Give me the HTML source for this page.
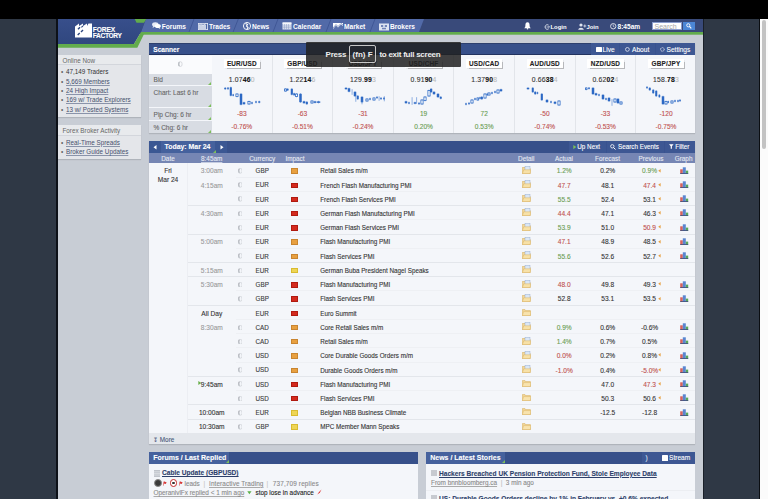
<!DOCTYPE html><html><head><meta charset="utf-8"><style>
*{margin:0;padding:0;box-sizing:border-box}
html,body{width:768px;height:499px;overflow:hidden;background:#2f3845;font-family:"Liberation Sans",sans-serif;}
.abs{position:absolute}
#topbar{left:0;top:0;width:768px;height:18.6px;background:#000;z-index:6}
#sb{left:759px;top:17px;width:9px;height:482px;background:#fbfbfb;border-left:1px solid #0b0e12}
#sbthumb{left:762.4px;top:20px;width:3.6px;height:129px;background:#c3c3c3;border-radius:2px}
#page{left:57px;top:18px;width:646px;height:481px;background:#c8cdd5;overflow:hidden}
#pageline{left:56.2px;top:18px;width:1.4px;height:481px;background:#0d1118;z-index:5}
.t{position:absolute;white-space:nowrap;-webkit-text-stroke:0.1px currentColor}
.nv{position:absolute;color:#fff;font-weight:bold;font-size:6.6px;line-height:8px;white-space:nowrap;top:4.8px}
.side{position:absolute;left:1px;width:83px;background:#e4e6ea;color:#333;font-size:6.3px;box-shadow:0 1px 1px rgba(0,0,0,.12)}
.side .sh{height:10.5px;line-height:11.2px;padding-left:4.5px;color:#666;border-bottom:1px solid #d3d6dc;background:#e8eaed}
.side ul{list-style:none;padding:2.1px 0 0 3px}
.side li{height:9.3px;line-height:9.3px;position:relative;padding-left:5px}
.side li:before{content:"\2022";position:absolute;left:0px;top:0;color:#666;font-size:6.5px}
.side a{color:#44506c;text-decoration:underline;text-decoration-color:#8a94aa}
</style></head><body><div id="wrap" style="position:absolute;left:0;top:0;width:768px;height:499px">
<div id="topbar" class="abs"></div>
<div id="pageline" class="abs"></div>
<div class="abs" style="left:702.6px;top:18px;width:1.2px;height:481px;background:#1a2029;z-index:5"></div>
<div id="page" class="abs">
<svg class="abs" style="left:0;top:0" width="646" height="32" viewBox="0 0 646 32">
<defs><linearGradient id="lg" x1="0" y1="0" x2="0" y2="1"><stop offset="0" stop-color="#384f8c"/><stop offset="1" stop-color="#30477f"/></linearGradient></defs>
<rect x="0" y="0" width="646" height="16" fill="#394a7a"/>
<polygon points="89,1 367,1 362,14 84,14" fill="#526aa8"/>
<g stroke="#3b5290" stroke-width="0.8">
<line x1="137" y1="1" x2="132" y2="14"/><line x1="181.3" y1="1" x2="176.1" y2="14"/>
<line x1="221" y1="1" x2="216" y2="14"/><line x1="274" y1="1" x2="269" y2="14"/>
<line x1="318" y1="1" x2="313" y2="14"/></g>
<rect x="84" y="14" width="562" height="2.7" fill="#62ac4c"/>
<polygon points="0,0 89,0 84,14 77,26.1 0,26.1" fill="url(#lg)"/>
<polygon points="77.7,1 89.3,1 87,4.7 79.5,4.7" fill="#62ac4c"/>
<polygon points="84,14 88,14 80.3,29.8 0,29.8 0,26.1 77,26.1" fill="#62ac4c"/>
</svg>
<svg class="abs" style="left:17.5px;top:5.2px" width="17" height="15" viewBox="0 0 17 15">
<path d="M0,3.5 L4,0.5 L4,3 L8,0.5 L8,3 L12,0.5 L12,3 L13.5,0.5 L17,0.5 L17,14.5 L0,14.5 Z" fill="#fff"/>
<path d="M2.5,5.8 l2,-2 l1,1 l-2,2z M5.5,8.5 l2,-2 l1,1 l-2,2z M2.2,11.5 l2,-2 l1,1 l-2,2z M6,4 l1.6,-1.6 l0.8,0.8 l-1.6,1.6z" fill="#2c467f"/>
</svg>
<div class="t" style="left:35.8px;top:8.6px;color:#fff;font-weight:bold;font-size:6.6px;line-height:6px;letter-spacing:-0.1px">FOREX</div>
<div class="t" style="left:35.8px;top:14.6px;color:#fff;font-weight:bold;font-size:6.6px;line-height:6px;letter-spacing:-0.35px">FACTORY</div>
<svg class="abs" style="left:95px;top:4.3px" width="9" height="7" viewBox="0 0 9 7"><ellipse cx="3.3" cy="2.6" rx="3.2" ry="2.3" fill="#e8ecf6"/><ellipse cx="5.8" cy="4" rx="3" ry="2.1" fill="#fff"/><path d="M1.2,4 L0.6,6 L3,4.6z" fill="#e8ecf6"/><path d="M7.5,5.5 L8.4,6.9 L6,5.8z" fill="#fff"/></svg>
<div class="nv" style="left:104.8px">Forums</div>
<svg class="abs" style="left:140.7px;top:4.8px" width="10" height="7" viewBox="0 0 10 7"><rect x="0.4" y="0.4" width="9.2" height="6.2" fill="none" stroke="#e6eaf4" stroke-width="0.8"/><rect x="1" y="2" width="7" height="4.5" fill="#c9d2e6"/><path d="M1,2 L3,1 L5,2.2 L8,0.8" stroke="#fff" stroke-width="0.7" fill="none"/></svg>
<div class="nv" style="left:152px">Trades</div>
<svg class="abs" style="left:186px;top:4.4px" width="8" height="8" viewBox="0 0 8 8"><circle cx="4" cy="4" r="3.6" fill="none" stroke="#fff" stroke-width="0.9"/><path d="M2.5,1.5 L4.5,2.5 L3.5,4 L5,5.5 L4,7" stroke="#fff" stroke-width="1.1" fill="none"/></svg>
<div class="nv" style="left:195px">News</div>
<svg class="abs" style="left:225px;top:4.4px" width="10" height="8" viewBox="0 0 10 8"><rect x="0.5" y="1" width="9" height="6.5" fill="#dfe5f2"/><g stroke="#8d9cc4" stroke-width="0.5"><line x1="2.5" y1="2" x2="2.5" y2="7.5"/><line x1="4.5" y1="2" x2="4.5" y2="7.5"/><line x1="6.5" y1="2" x2="6.5" y2="7.5"/><line x1="0.5" y1="4" x2="9.5" y2="4"/><line x1="0.5" y1="5.7" x2="9.5" y2="5.7"/></g><rect x="0.5" y="0.3" width="9" height="1.4" fill="#fff"/></svg>
<div class="nv" style="left:236px">Calendar</div>
<svg class="abs" style="left:276px;top:4.6px" width="10" height="7" viewBox="0 0 10 7"><rect x="0" y="0" width="10" height="7" fill="#fff"/><path d="M0,6 L3,2.5 L5,4.5 L8,1.5 L10,3 L10,7 L0,7z" fill="#5a72ad"/><path d="M0,5 L3,1.5 L5,3.5 L8,0.5 L10,2" stroke="#4e68a6" stroke-width="0.6" fill="none"/></svg>
<div class="nv" style="left:287px">Market</div>
<svg class="abs" style="left:322px;top:4.5px" width="10" height="8" viewBox="0 0 10 8"><rect x="0" y="0.5" width="10" height="7" fill="#dde3f1"/><rect x="2" y="2" width="2.2" height="2" fill="#7185b9"/><rect x="5.8" y="2" width="2.2" height="2" fill="#7185b9"/><rect x="3" y="4.8" width="4" height="1.5" fill="#7185b9"/></svg>
<div class="nv" style="left:333px">Brokers</div>
<svg class="abs" style="left:467px;top:4.2px" width="7" height="7.5" viewBox="0 0 7 7.5"><path d="M3.5,0.3 C5.3,0.3 5.6,2 5.6,3.5 L5.8,5 L6.8,6.2 L0.2,6.2 L1.2,5 L1.4,3.5 C1.4,2 1.7,0.3 3.5,0.3z" fill="#fff"/><circle cx="3.5" cy="6.8" r="0.8" fill="#fff"/></svg>
<svg class="abs" style="left:486.5px;top:5.6px" width="6" height="6" viewBox="0 0 6 6"><path d="M4.5,1 A2.3,2.3 0 1 0 4.5,5" stroke="#dfe4ef" stroke-width="0.9" fill="none"/><path d="M2.5,3 L5.5,3 M4.3,1.8 L5.5,3 L4.3,4.2" stroke="#dfe4ef" stroke-width="0.7" fill="none"/></svg>
<div class="nv" style="left:493.5px;font-size:5.9px">Login</div>
<svg class="abs" style="left:520.5px;top:5.2px" width="9" height="7" viewBox="0 0 9 7"><circle cx="3" cy="2" r="1.6" fill="#dfe4ef"/><path d="M0.2,6.8 C0.5,4 5.5,4 5.8,6.8z" fill="#dfe4ef"/><path d="M6.8,1.5 L6.8,4.5 M5.3,3 L8.3,3" stroke="#dfe4ef" stroke-width="0.8"/></svg>
<div class="nv" style="left:529.5px;font-size:5.9px">Join</div>
<svg class="abs" style="left:553px;top:5.4px" width="6.5" height="6.5" viewBox="0 0 6.5 6.5"><circle cx="3.25" cy="3.25" r="2.7" stroke="#e4e8f1" stroke-width="0.9" fill="none"/><path d="M3.25,1.5 L3.25,3.4 L4.6,4.2" stroke="#e4e8f1" stroke-width="0.7" fill="none"/></svg>
<div class="nv" style="left:560.5px">8:45am</div>
<div class="abs" style="left:595.3px;top:3.9px;width:30.2px;height:8px;background:#fff;border:0.5px solid #8a9ccc;color:#a8a8a8;font-size:7px;line-height:7.2px;padding-left:1.2px">Search</div>
<div class="abs" style="left:625.8px;top:3.9px;width:11.9px;height:7.9px;background:#4b86d6"></div>
<svg class="abs" style="left:628.8px;top:5.4px" width="6" height="6" viewBox="0 0 6 6"><circle cx="2.3" cy="2.3" r="1.6" stroke="#fff" stroke-width="0.9" fill="none"/><path d="M3.4,3.4 L5.3,5.3" stroke="#fff" stroke-width="1.2"/></svg>
<div class="side" style="top:36.8px;height:62.2px"><div class="sh">Online Now</div><ul>
<li>47,149 Traders</li><li><a>5,669 Members</a></li><li><a>24 High Impact</a></li><li><a>169 w/ Trade Explorers</a></li><li><a>13 w/ Posted Systems</a></li></ul></div>
<div class="side" style="top:107px;height:34px"><div class="sh">Forex Broker Activity</div><ul>
<li><a>Real-Time Spreads</a></li><li><a>Broker Guide Updates</a></li></ul></div>
<div class="abs" style="left:92px;top:25.3px;width:546px;height:90px;background:#f4f6fa;box-shadow:0 1px 1px rgba(0,0,0,.12)"></div>
<div class="abs" style="left:92px;top:25.3px;width:546px;height:11.7px;background:#37508a"></div>
<div class="abs" style="left:92px;top:36.0px;width:546px;height:1px;background:#22335f"></div>
<div class="abs" style="left:92px;top:25.3px;width:546px;height:0.8px;background:#2d406e"></div>
<div class="t" style="left:96.3px;top:27.6px;color:#fff;font-weight:bold;font-size:6.6px;line-height:8px">Scanner</div>
<div class="abs" style="left:92px;top:37.5px;width:62.5px;height:18.200000000000003px;background:#fafbfd"></div>
<div class="abs" style="left:92px;top:56.2px;width:62.5px;height:10.799999999999997px;background:#d8dce3"></div>
<div class="t" style="left:96.6px;top:57.1px;color:#666;font-size:6.5px;line-height:9px">Bid</div>
<svg class="abs" style="left:151px;top:63.7px" width="3" height="3"><path d="M3,0 L3,3 L0,3z" fill="#7cc05a"/></svg>
<div class="abs" style="left:92px;top:67.5px;width:62.5px;height:21.5px;background:#d8dce3"></div>
<div class="t" style="left:96.6px;top:69.6px;color:#666;font-size:6.5px;line-height:9px">Chart: Last 6 hr</div>
<svg class="abs" style="left:151px;top:85.7px" width="3" height="3"><path d="M3,0 L3,3 L0,3z" fill="#7cc05a"/></svg>
<div class="abs" style="left:92px;top:89.5px;width:62.5px;height:12.5px;background:#d8dce3"></div>
<div class="t" style="left:96.6px;top:91.7px;color:#666;font-size:6.5px;line-height:9px">Pip Chg: 6 hr</div>
<svg class="abs" style="left:151px;top:98.7px" width="3" height="3"><path d="M3,0 L3,3 L0,3z" fill="#7cc05a"/></svg>
<div class="abs" style="left:92px;top:102.5px;width:62.5px;height:12.699999999999989px;background:#d8dce3"></div>
<div class="t" style="left:96.6px;top:104.7px;color:#666;font-size:6.5px;line-height:9px">% Chg: 6 hr</div>
<svg class="abs" style="left:151px;top:111.89999999999999px" width="3" height="3"><path d="M3,0 L3,3 L0,3z" fill="#7cc05a"/></svg>
<svg class="abs" style="left:121.4px;top:42.8px" width="4.4" height="6.2" viewBox="0 0 4.4 5.6"><rect x="0.4" y="0.4" width="3.6" height="4.8" rx="1.6" fill="none" stroke="#c9ccd3" stroke-width="0.7"/><path d="M1.2,0.9 Q0.5,2.8 1.2,4.7" stroke="#9ea2aa" stroke-width="0.9" fill="none"/></svg>
<div class="abs" style="left:166.60000000000002px;top:40.9px;width:36.4px;height:9.2px;background:#fff;box-shadow:0.5px 0.5px 0.8px rgba(0,0,0,.25)"></div>
<div class="t" style="left:166.60000000000002px;top:40.7px;width:36.4px;text-align:center;color:#222;font-weight:bold;font-size:6.4px;line-height:9.2px;letter-spacing:0.15px">EUR/USD</div>
<div class="t" style="left:154.8px;top:56.7px;width:60px;text-align:center;color:#333;font-size:6.8px;line-height:9px;letter-spacing:0.2px">1.07<b style="color:#111">46</b><span style="color:#bbb">0</span></div>
<div class="t" style="left:154.8px;top:91.4px;width:60px;text-align:center;color:#c0504d;font-size:6.6px;line-height:9px">-83</div>
<div class="t" style="left:154.8px;top:103.8px;width:60px;text-align:center;color:#c0504d;font-size:6.6px;line-height:9px">-0.76%</div>
<div class="abs" style="left:214.6px;top:37.3px;width:0.6px;height:78px;background:#e2e5ea"></div>
<div class="abs" style="left:227.20000000000002px;top:40.9px;width:36.4px;height:9.2px;background:#fff;box-shadow:0.5px 0.5px 0.8px rgba(0,0,0,.25)"></div>
<div class="t" style="left:227.20000000000002px;top:40.7px;width:36.4px;text-align:center;color:#222;font-weight:bold;font-size:6.4px;line-height:9.2px;letter-spacing:0.15px">GBP/USD</div>
<div class="t" style="left:215.4px;top:56.7px;width:60px;text-align:center;color:#333;font-size:6.8px;line-height:9px;letter-spacing:0.2px">1.22<b style="color:#111">14</b><span style="color:#bbb">6</span></div>
<div class="t" style="left:215.4px;top:91.4px;width:60px;text-align:center;color:#c0504d;font-size:6.6px;line-height:9px">-63</div>
<div class="t" style="left:215.4px;top:103.8px;width:60px;text-align:center;color:#c0504d;font-size:6.6px;line-height:9px">-0.51%</div>
<div class="abs" style="left:275.2px;top:37.3px;width:0.6px;height:78px;background:#e2e5ea"></div>
<div class="abs" style="left:287.8px;top:40.9px;width:36.4px;height:9.2px;background:#fff;box-shadow:0.5px 0.5px 0.8px rgba(0,0,0,.25)"></div>
<div class="t" style="left:287.8px;top:40.7px;width:36.4px;text-align:center;color:#222;font-weight:bold;font-size:6.4px;line-height:9.2px;letter-spacing:0.15px">USD/JPY</div>
<div class="t" style="left:276.0px;top:56.7px;width:60px;text-align:center;color:#333;font-size:6.8px;line-height:9px;letter-spacing:0.2px">129.<b style="color:#111">99</b><span style="color:#bbb">3</span></div>
<div class="t" style="left:276.0px;top:91.4px;width:60px;text-align:center;color:#c0504d;font-size:6.6px;line-height:9px">-31</div>
<div class="t" style="left:276.0px;top:103.8px;width:60px;text-align:center;color:#c0504d;font-size:6.6px;line-height:9px">-0.24%</div>
<div class="abs" style="left:335.8px;top:37.3px;width:0.6px;height:78px;background:#e2e5ea"></div>
<div class="abs" style="left:348.40000000000003px;top:40.9px;width:36.4px;height:9.2px;background:#fff;box-shadow:0.5px 0.5px 0.8px rgba(0,0,0,.25)"></div>
<div class="t" style="left:348.40000000000003px;top:40.7px;width:36.4px;text-align:center;color:#222;font-weight:bold;font-size:6.4px;line-height:9.2px;letter-spacing:0.15px">USD/CHF</div>
<div class="t" style="left:336.6px;top:56.7px;width:60px;text-align:center;color:#333;font-size:6.8px;line-height:9px;letter-spacing:0.2px">0.91<b style="color:#111">90</b><span style="color:#bbb">4</span></div>
<div class="t" style="left:336.6px;top:91.4px;width:60px;text-align:center;color:#6a9d52;font-size:6.6px;line-height:9px">19</div>
<div class="t" style="left:336.6px;top:103.8px;width:60px;text-align:center;color:#6a9d52;font-size:6.6px;line-height:9px">0.20%</div>
<div class="abs" style="left:396.4px;top:37.3px;width:0.6px;height:78px;background:#e2e5ea"></div>
<div class="abs" style="left:409.0px;top:40.9px;width:36.4px;height:9.2px;background:#fff;box-shadow:0.5px 0.5px 0.8px rgba(0,0,0,.25)"></div>
<div class="t" style="left:409.0px;top:40.7px;width:36.4px;text-align:center;color:#222;font-weight:bold;font-size:6.4px;line-height:9.2px;letter-spacing:0.15px">USD/CAD</div>
<div class="t" style="left:397.2px;top:56.7px;width:60px;text-align:center;color:#333;font-size:6.8px;line-height:9px;letter-spacing:0.2px">1.37<b style="color:#111">90</b><span style="color:#bbb">8</span></div>
<div class="t" style="left:397.2px;top:91.4px;width:60px;text-align:center;color:#6a9d52;font-size:6.6px;line-height:9px">72</div>
<div class="t" style="left:397.2px;top:103.8px;width:60px;text-align:center;color:#6a9d52;font-size:6.6px;line-height:9px">0.53%</div>
<div class="abs" style="left:457.0px;top:37.3px;width:0.6px;height:78px;background:#e2e5ea"></div>
<div class="abs" style="left:469.6px;top:40.9px;width:36.4px;height:9.2px;background:#fff;box-shadow:0.5px 0.5px 0.8px rgba(0,0,0,.25)"></div>
<div class="t" style="left:469.6px;top:40.7px;width:36.4px;text-align:center;color:#222;font-weight:bold;font-size:6.4px;line-height:9.2px;letter-spacing:0.15px">AUD/USD</div>
<div class="t" style="left:457.8px;top:56.7px;width:60px;text-align:center;color:#333;font-size:6.8px;line-height:9px;letter-spacing:0.2px">0.66<b style="color:#111">38</b><span style="color:#bbb">4</span></div>
<div class="t" style="left:457.8px;top:91.4px;width:60px;text-align:center;color:#c0504d;font-size:6.6px;line-height:9px">-50</div>
<div class="t" style="left:457.8px;top:103.8px;width:60px;text-align:center;color:#c0504d;font-size:6.6px;line-height:9px">-0.74%</div>
<div class="abs" style="left:517.6px;top:37.3px;width:0.6px;height:78px;background:#e2e5ea"></div>
<div class="abs" style="left:530.1999999999999px;top:40.9px;width:36.4px;height:9.2px;background:#fff;box-shadow:0.5px 0.5px 0.8px rgba(0,0,0,.25)"></div>
<div class="t" style="left:530.1999999999999px;top:40.7px;width:36.4px;text-align:center;color:#222;font-weight:bold;font-size:6.4px;line-height:9.2px;letter-spacing:0.15px">NZD/USD</div>
<div class="t" style="left:518.4px;top:56.7px;width:60px;text-align:center;color:#333;font-size:6.8px;line-height:9px;letter-spacing:0.2px">0.62<b style="color:#111">02</b><span style="color:#bbb">4</span></div>
<div class="t" style="left:518.4px;top:91.4px;width:60px;text-align:center;color:#c0504d;font-size:6.6px;line-height:9px">-33</div>
<div class="t" style="left:518.4px;top:103.8px;width:60px;text-align:center;color:#c0504d;font-size:6.6px;line-height:9px">-0.53%</div>
<div class="abs" style="left:578.2px;top:37.3px;width:0.6px;height:78px;background:#e2e5ea"></div>
<div class="abs" style="left:590.8px;top:40.9px;width:36.4px;height:9.2px;background:#fff;box-shadow:0.5px 0.5px 0.8px rgba(0,0,0,.25)"></div>
<div class="t" style="left:590.8px;top:40.7px;width:36.4px;text-align:center;color:#222;font-weight:bold;font-size:6.4px;line-height:9.2px;letter-spacing:0.15px">GBP/JPY</div>
<div class="t" style="left:579.0px;top:56.7px;width:60px;text-align:center;color:#333;font-size:6.8px;line-height:9px;letter-spacing:0.2px">158.<b style="color:#111">78</b><span style="color:#bbb">3</span></div>
<div class="t" style="left:579.0px;top:91.4px;width:60px;text-align:center;color:#c0504d;font-size:6.6px;line-height:9px">-120</div>
<div class="t" style="left:579.0px;top:103.8px;width:60px;text-align:center;color:#c0504d;font-size:6.6px;line-height:9px">-0.75%</div>
<svg class="abs" style="left:-57px;top:-17.5px" width="768" height="499" viewBox="0 0 768 499"><line x1="225.25" y1="86.2" x2="225.25" y2="88.8" stroke="#4a80d0" stroke-width="0.6"/><rect x="224.25" y="86.8" width="2.0" height="1.4" fill="#2c68c4"/><line x1="228.0" y1="86.0" x2="228.0" y2="88.8" stroke="#4a80d0" stroke-width="0.6"/><rect x="227.25" y="86.6" width="1.5" height="1.6000000000000028" fill="#2c68c4"/><line x1="230.8" y1="85.7" x2="230.8" y2="95.3" stroke="#4a80d0" stroke-width="0.6"/><rect x="229.75" y="86.3" width="2.0999999999999943" height="8.4" fill="#2c68c4"/><line x1="233.2" y1="92.8" x2="233.2" y2="95.39999999999999" stroke="#4a80d0" stroke-width="0.6"/><rect x="232.45" y="93.39999999999999" width="1.5" height="1.4" fill="#2c68c4"/><line x1="237.0" y1="92.2" x2="237.0" y2="96.3" stroke="#4a80d0" stroke-width="0.6"/><rect x="235.9" y="93" width="2.2" height="2.5" fill="#fff" stroke="#2f6cc6" stroke-width="0.8"/><line x1="241.0" y1="92.2" x2="241.0" y2="104.3" stroke="#4a80d0" stroke-width="0.6"/><rect x="239.75" y="92.8" width="2.5" height="10.9" fill="#2c68c4"/><line x1="244.0" y1="100.7" x2="244.0" y2="103.8" stroke="#4a80d0" stroke-width="0.6"/><rect x="242.75" y="101.3" width="2.5" height="1.9" fill="#2c68c4"/><line x1="249.0" y1="99.7" x2="249.0" y2="103.8" stroke="#4a80d0" stroke-width="0.6"/><rect x="247.9" y="100.5" width="2.2" height="2.5" fill="#fff" stroke="#2f6cc6" stroke-width="0.8"/><line x1="252.0" y1="100.7" x2="252.0" y2="103.3" stroke="#4a80d0" stroke-width="0.6"/><rect x="251.25" y="101.3" width="1.5" height="1.4" fill="#2c68c4"/><line x1="256.0" y1="99.7" x2="256.0" y2="102.3" stroke="#4a80d0" stroke-width="0.6"/><rect x="255.25" y="100.3" width="1.5" height="1.4" fill="#2c68c4"/><line x1="259.25" y1="99.7" x2="259.25" y2="102.3" stroke="#4a80d0" stroke-width="0.6"/><rect x="258.25" y="100.3" width="2.0" height="1.4" fill="#2c68c4"/><line x1="285.5" y1="87.2" x2="285.5" y2="90.8" stroke="#4a80d0" stroke-width="0.6"/><rect x="284.4" y="88" width="2.2" height="2" fill="#fff" stroke="#2f6cc6" stroke-width="0.8"/><line x1="287.65" y1="87.2" x2="287.65" y2="90.0" stroke="#4a80d0" stroke-width="0.6"/><rect x="286.75" y="87.8" width="1.8000000000000114" height="1.6000000000000028" fill="#2c68c4"/><line x1="291.8" y1="87.2" x2="291.8" y2="94.3" stroke="#4a80d0" stroke-width="0.6"/><rect x="290.75" y="87.8" width="2.1000000000000227" height="5.9" fill="#2c68c4"/><line x1="294.1" y1="91.7" x2="294.1" y2="94.8" stroke="#4a80d0" stroke-width="0.6"/><rect x="293.25" y="92.3" width="1.6999999999999886" height="1.9" fill="#2c68c4"/><line x1="296.5" y1="92.2" x2="296.5" y2="96.3" stroke="#4a80d0" stroke-width="0.6"/><rect x="295.4" y="93" width="2.2" height="2.5" fill="#fff" stroke="#2f6cc6" stroke-width="0.8"/><line x1="300.5" y1="92.2" x2="300.5" y2="101.8" stroke="#4a80d0" stroke-width="0.6"/><rect x="299.25" y="92.8" width="2.5" height="8.4" fill="#2c68c4"/><line x1="304.0" y1="99.7" x2="304.0" y2="102.8" stroke="#4a80d0" stroke-width="0.6"/><rect x="302.75" y="100.3" width="2.5" height="1.9" fill="#2c68c4"/><line x1="306.8" y1="100.2" x2="306.8" y2="103.8" stroke="#4a80d0" stroke-width="0.6"/><rect x="305.75" y="100.8" width="2.1000000000000227" height="2.4" fill="#2c68c4"/><line x1="312.0" y1="99.2" x2="312.0" y2="102.8" stroke="#4a80d0" stroke-width="0.6"/><rect x="310.9" y="100" width="2.2" height="2" fill="#fff" stroke="#2f6cc6" stroke-width="0.8"/><line x1="315.0" y1="99.8" x2="315.0" y2="102.39999999999999" stroke="#4a80d0" stroke-width="0.6"/><rect x="313.75" y="100.39999999999999" width="2.5" height="1.4" fill="#2c68c4"/><line x1="318.5" y1="99.8" x2="318.5" y2="102.39999999999999" stroke="#4a80d0" stroke-width="0.6"/><rect x="316.75" y="100.39999999999999" width="3.5" height="1.4" fill="#2c68c4"/><line x1="346.0" y1="86.2" x2="346.0" y2="88.8" stroke="#4a80d0" stroke-width="0.6"/><rect x="344.75" y="86.8" width="2.5" height="1.4" fill="#2c68c4"/><line x1="349.0" y1="86.7" x2="349.0" y2="91.3" stroke="#4a80d0" stroke-width="0.6"/><rect x="347.75" y="87.3" width="2.5" height="3.4" fill="#2c68c4"/><line x1="352.1" y1="88.2" x2="352.1" y2="93.8" stroke="#4a80d0" stroke-width="0.6"/><line x1="355.0" y1="90.2" x2="355.0" y2="95.8" stroke="#4a80d0" stroke-width="0.6"/><rect x="353.75" y="90.8" width="2.5" height="4.4" fill="#2c68c4"/><line x1="357.75" y1="94.2" x2="357.75" y2="98.8" stroke="#4a80d0" stroke-width="0.6"/><rect x="356.75" y="94.8" width="2.0" height="3.4" fill="#2c68c4"/><line x1="355.8" y1="94.2" x2="355.8" y2="100.8" stroke="#4a80d0" stroke-width="0.6"/><line x1="362.0" y1="95.2" x2="362.0" y2="101.8" stroke="#4a80d0" stroke-width="0.6"/><rect x="360.75" y="95.8" width="2.5" height="5.4" fill="#2c68c4"/><line x1="362.0" y1="99.2" x2="362.0" y2="103.3" stroke="#4a80d0" stroke-width="0.6"/><line x1="367.0" y1="97.2" x2="367.0" y2="100.8" stroke="#4a80d0" stroke-width="0.6"/><rect x="365.9" y="98" width="2.2" height="2" fill="#fff" stroke="#2f6cc6" stroke-width="0.8"/><line x1="370.0" y1="96.7" x2="370.0" y2="99.3" stroke="#4a80d0" stroke-width="0.6"/><rect x="369.25" y="97.3" width="1.5" height="1.4" fill="#2c68c4"/><line x1="374.0" y1="96.2" x2="374.0" y2="99.8" stroke="#4a80d0" stroke-width="0.6"/><rect x="372.9" y="97" width="2.2" height="2" fill="#fff" stroke="#2f6cc6" stroke-width="0.8"/><line x1="377.0" y1="95.2" x2="377.0" y2="97.8" stroke="#4a80d0" stroke-width="0.6"/><rect x="376.25" y="95.8" width="1.5" height="1.4" fill="#2c68c4"/><line x1="379.1" y1="95.2" x2="379.1" y2="99.8" stroke="#4a80d0" stroke-width="0.6"/><line x1="381.0" y1="96.2" x2="381.0" y2="98.8" stroke="#4a80d0" stroke-width="0.6"/><rect x="380.25" y="96.8" width="1.5" height="1.4" fill="#2c68c4"/><line x1="384.0" y1="96.2" x2="384.0" y2="98.8" stroke="#4a80d0" stroke-width="0.6"/><rect x="383.25" y="96.8" width="1.5" height="1.4" fill="#2c68c4"/><line x1="384.3" y1="95.2" x2="384.3" y2="100.3" stroke="#4a80d0" stroke-width="0.6"/><line x1="406.0" y1="99.7" x2="406.0" y2="102.8" stroke="#4a80d0" stroke-width="0.6"/><rect x="404.75" y="100.3" width="2.5" height="1.9" fill="#2c68c4"/><line x1="409.0" y1="100.7" x2="409.0" y2="103.3" stroke="#4a80d0" stroke-width="0.6"/><rect x="408.25" y="101.3" width="1.5" height="1.4" fill="#2c68c4"/><line x1="412.1" y1="96.2" x2="412.1" y2="103.8" stroke="#4a80d0" stroke-width="0.6"/><line x1="415.0" y1="100.7" x2="415.0" y2="103.3" stroke="#4a80d0" stroke-width="0.6"/><rect x="413.75" y="101.3" width="2.5" height="1.4" fill="#2c68c4"/><line x1="416.6" y1="96.2" x2="416.6" y2="102.8" stroke="#4a80d0" stroke-width="0.6"/><line x1="419.0" y1="101.2" x2="419.0" y2="103.8" stroke="#4a80d0" stroke-width="0.6"/><rect x="418.25" y="101.8" width="1.5" height="1.4" fill="#2c68c4"/><line x1="422.0" y1="98.2" x2="422.0" y2="103.8" stroke="#4a80d0" stroke-width="0.6"/><rect x="420.9" y="99" width="2.2" height="4" fill="#fff" stroke="#2f6cc6" stroke-width="0.8"/><line x1="425.0" y1="95.2" x2="425.0" y2="100.3" stroke="#4a80d0" stroke-width="0.6"/><rect x="423.9" y="96" width="2.2" height="3.5" fill="#fff" stroke="#2f6cc6" stroke-width="0.8"/><line x1="429.0" y1="88.7" x2="429.0" y2="95.8" stroke="#4a80d0" stroke-width="0.6"/><rect x="427.9" y="89.5" width="2.2" height="5.5" fill="#fff" stroke="#2f6cc6" stroke-width="0.8"/><line x1="431.15" y1="87.2" x2="431.15" y2="91.8" stroke="#4a80d0" stroke-width="0.6"/><rect x="430.05" y="87.8" width="2.1999999999999886" height="3.4" fill="#2c68c4"/><line x1="434.0" y1="90.2" x2="434.0" y2="93.8" stroke="#4a80d0" stroke-width="0.6"/><rect x="432.75" y="90.8" width="2.5" height="2.4" fill="#2c68c4"/><line x1="438.0" y1="92.2" x2="438.0" y2="96.8" stroke="#4a80d0" stroke-width="0.6"/><rect x="436.75" y="92.8" width="2.5" height="3.4" fill="#2c68c4"/><line x1="440.75" y1="95.2" x2="440.75" y2="98.3" stroke="#4a80d0" stroke-width="0.6"/><rect x="439.75" y="95.8" width="2.0" height="1.9" fill="#2c68c4"/><line x1="466.0" y1="101.7" x2="466.0" y2="104.3" stroke="#4a80d0" stroke-width="0.6"/><rect x="465.25" y="102.3" width="1.5" height="1.4" fill="#2c68c4"/><line x1="469.0" y1="101.2" x2="469.0" y2="103.8" stroke="#4a80d0" stroke-width="0.6"/><rect x="468.25" y="101.8" width="1.5" height="1.4" fill="#2c68c4"/><line x1="472.0" y1="98.2" x2="472.0" y2="102.8" stroke="#4a80d0" stroke-width="0.6"/><rect x="470.9" y="99" width="2.2" height="3" fill="#fff" stroke="#2f6cc6" stroke-width="0.8"/><line x1="475.0" y1="96.7" x2="475.0" y2="99.3" stroke="#4a80d0" stroke-width="0.6"/><rect x="474.25" y="97.3" width="1.5" height="1.4" fill="#2c68c4"/><line x1="477.8" y1="96.2" x2="477.8" y2="99.8" stroke="#4a80d0" stroke-width="0.6"/><rect x="476.9" y="97" width="1.8000000000000227" height="2" fill="#fff" stroke="#2f6cc6" stroke-width="0.8"/><line x1="480.0" y1="95.7" x2="480.0" y2="98.3" stroke="#4a80d0" stroke-width="0.6"/><rect x="479.25" y="96.3" width="1.5" height="1.4" fill="#2c68c4"/><line x1="481.8" y1="95.2" x2="481.8" y2="98.8" stroke="#4a80d0" stroke-width="0.6"/><rect x="480.75" y="95.8" width="2.1000000000000227" height="2.4" fill="#2c68c4"/><line x1="485.0" y1="92.2" x2="485.0" y2="97.8" stroke="#4a80d0" stroke-width="0.6"/><rect x="483.9" y="93" width="2.2" height="4" fill="#fff" stroke="#2f6cc6" stroke-width="0.8"/><line x1="487.3" y1="92.2" x2="487.3" y2="94.8" stroke="#4a80d0" stroke-width="0.6"/><rect x="486.55" y="92.8" width="1.5" height="1.4" fill="#2c68c4"/><line x1="489.0" y1="91.2" x2="489.0" y2="94.8" stroke="#4a80d0" stroke-width="0.6"/><rect x="487.9" y="92" width="2.2" height="2" fill="#fff" stroke="#2f6cc6" stroke-width="0.8"/><line x1="492.0" y1="90.7" x2="492.0" y2="93.3" stroke="#4a80d0" stroke-width="0.6"/><rect x="491.25" y="91.3" width="1.5" height="1.4" fill="#2c68c4"/><line x1="495.0" y1="89.7" x2="495.0" y2="92.3" stroke="#4a80d0" stroke-width="0.6"/><rect x="494.25" y="90.3" width="1.5" height="1.4" fill="#2c68c4"/><line x1="498.0" y1="88.2" x2="498.0" y2="92.8" stroke="#4a80d0" stroke-width="0.6"/><rect x="496.9" y="89" width="2.2" height="3" fill="#fff" stroke="#2f6cc6" stroke-width="0.8"/><line x1="501.0" y1="87.7" x2="501.0" y2="90.8" stroke="#4a80d0" stroke-width="0.6"/><rect x="499.75" y="88.3" width="2.5" height="1.9" fill="#2c68c4"/><line x1="528.0" y1="86.2" x2="528.0" y2="88.8" stroke="#4a80d0" stroke-width="0.6"/><rect x="526.75" y="86.8" width="2.5" height="1.4" fill="#2c68c4"/><line x1="532.75" y1="86.2" x2="532.75" y2="91.8" stroke="#4a80d0" stroke-width="0.6"/><rect x="531.75" y="86.8" width="2.0" height="4.4" fill="#2c68c4"/><line x1="535.25" y1="90.2" x2="535.25" y2="93.8" stroke="#4a80d0" stroke-width="0.6"/><rect x="534.25" y="90.8" width="2.0" height="2.4" fill="#2c68c4"/><line x1="537.5" y1="90.7" x2="537.5" y2="93.3" stroke="#4a80d0" stroke-width="0.6"/><rect x="536.75" y="91.3" width="1.5" height="1.4" fill="#2c68c4"/><line x1="541.8" y1="92.2" x2="541.8" y2="99.8" stroke="#4a80d0" stroke-width="0.6"/><rect x="540.75" y="92.8" width="2.1000000000000227" height="6.4" fill="#2c68c4"/><line x1="547.0" y1="98.2" x2="547.0" y2="101.8" stroke="#4a80d0" stroke-width="0.6"/><rect x="545.75" y="98.8" width="2.5" height="2.4" fill="#2c68c4"/><line x1="551.0" y1="99.7" x2="551.0" y2="102.3" stroke="#4a80d0" stroke-width="0.6"/><rect x="550.25" y="100.3" width="1.5" height="1.4" fill="#2c68c4"/><line x1="555.0" y1="100.2" x2="555.0" y2="103.3" stroke="#4a80d0" stroke-width="0.6"/><rect x="553.75" y="100.8" width="2.5" height="1.9" fill="#2c68c4"/><line x1="559.0" y1="99.2" x2="559.0" y2="104.8" stroke="#4a80d0" stroke-width="0.6"/><rect x="557.9" y="100" width="2.2" height="4" fill="#fff" stroke="#2f6cc6" stroke-width="0.8"/><line x1="586.25" y1="86.2" x2="586.25" y2="89.3" stroke="#4a80d0" stroke-width="0.6"/><rect x="585.4" y="87" width="1.7" height="1.5" fill="#fff" stroke="#2f6cc6" stroke-width="0.8"/><line x1="589.0" y1="86.0" x2="589.0" y2="88.6" stroke="#4a80d0" stroke-width="0.6"/><rect x="588.25" y="86.6" width="1.5" height="1.4" fill="#2c68c4"/><line x1="593.0" y1="86.2" x2="593.0" y2="93.8" stroke="#4a80d0" stroke-width="0.6"/><rect x="591.75" y="86.8" width="2.5" height="6.4" fill="#2c68c4"/><line x1="596.0" y1="91.7" x2="596.0" y2="94.8" stroke="#4a80d0" stroke-width="0.6"/><rect x="594.75" y="92.3" width="2.5" height="1.9" fill="#2c68c4"/><line x1="599.0" y1="92.7" x2="599.0" y2="95.3" stroke="#4a80d0" stroke-width="0.6"/><rect x="598.25" y="93.3" width="1.5" height="1.4" fill="#2c68c4"/><line x1="603.0" y1="93.2" x2="603.0" y2="98.8" stroke="#4a80d0" stroke-width="0.6"/><rect x="601.75" y="93.8" width="2.5" height="4.4" fill="#2c68c4"/><line x1="606.0" y1="96.7" x2="606.0" y2="99.3" stroke="#4a80d0" stroke-width="0.6"/><rect x="605.25" y="97.3" width="1.5" height="1.4" fill="#2c68c4"/><line x1="609.0" y1="96.2" x2="609.0" y2="100.8" stroke="#4a80d0" stroke-width="0.6"/><rect x="607.75" y="96.8" width="2.5" height="3.4" fill="#2c68c4"/><line x1="612.0" y1="98.2" x2="612.0" y2="104.8" stroke="#4a80d0" stroke-width="0.6"/><line x1="615.0" y1="97.2" x2="615.0" y2="101.8" stroke="#4a80d0" stroke-width="0.6"/><rect x="613.9" y="98" width="2.2" height="3" fill="#fff" stroke="#2f6cc6" stroke-width="0.8"/><line x1="618.0" y1="97.2" x2="618.0" y2="102.8" stroke="#4a80d0" stroke-width="0.6"/><rect x="616.75" y="97.8" width="2.5" height="4.4" fill="#2c68c4"/><line x1="621.0" y1="100.2" x2="621.0" y2="103.8" stroke="#4a80d0" stroke-width="0.6"/><rect x="619.9" y="101" width="2.2" height="2" fill="#fff" stroke="#2f6cc6" stroke-width="0.8"/><line x1="647.0" y1="85.2" x2="647.0" y2="87.8" stroke="#4a80d0" stroke-width="0.6"/><rect x="646.25" y="85.8" width="1.5" height="1.4" fill="#2c68c4"/><line x1="649.75" y1="86.2" x2="649.75" y2="89.8" stroke="#4a80d0" stroke-width="0.6"/><rect x="648.75" y="86.8" width="2.0" height="2.4" fill="#2c68c4"/><line x1="653.25" y1="88.2" x2="653.25" y2="92.8" stroke="#4a80d0" stroke-width="0.6"/><rect x="652.25" y="88.8" width="2.0" height="3.4" fill="#2c68c4"/><line x1="656.25" y1="89.2" x2="656.25" y2="95.8" stroke="#4a80d0" stroke-width="0.6"/><rect x="655.25" y="89.8" width="2.0" height="5.4" fill="#2c68c4"/><line x1="659.4" y1="93.2" x2="659.4" y2="96.8" stroke="#4a80d0" stroke-width="0.6"/><rect x="658.55" y="93.8" width="1.7000000000000455" height="2.4" fill="#2c68c4"/><line x1="663.0" y1="94.7" x2="663.0" y2="103.8" stroke="#4a80d0" stroke-width="0.6"/><rect x="661.75" y="95.3" width="2.5" height="7.9" fill="#2c68c4"/><line x1="666.0" y1="99.7" x2="666.0" y2="103.8" stroke="#4a80d0" stroke-width="0.6"/><rect x="664.9" y="100.5" width="2.2" height="2.5" fill="#fff" stroke="#2f6cc6" stroke-width="0.8"/><line x1="668.3" y1="99.7" x2="668.3" y2="102.3" stroke="#4a80d0" stroke-width="0.6"/><rect x="667.55" y="100.3" width="1.5" height="1.4" fill="#2c68c4"/><line x1="672.0" y1="99.2" x2="672.0" y2="102.8" stroke="#4a80d0" stroke-width="0.6"/><rect x="670.9" y="100" width="2.2" height="2" fill="#fff" stroke="#2f6cc6" stroke-width="0.8"/><line x1="675.0" y1="98.7" x2="675.0" y2="101.3" stroke="#4a80d0" stroke-width="0.6"/><rect x="674.25" y="99.3" width="1.5" height="1.4" fill="#2c68c4"/><line x1="678.0" y1="98.7" x2="678.0" y2="101.3" stroke="#4a80d0" stroke-width="0.6"/><rect x="677.25" y="99.3" width="1.5" height="1.4" fill="#2c68c4"/><line x1="680.0" y1="98.2" x2="680.0" y2="100.8" stroke="#4a80d0" stroke-width="0.6"/><rect x="679.25" y="98.8" width="1.5" height="1.4" fill="#2c68c4"/></svg>
<div class="abs" style="left:92px;top:123px;width:546px;height:303px;background:#f4f6fa;box-shadow:0 1px 1px rgba(0,0,0,.12)"></div>
<div class="abs" style="left:92px;top:123px;width:546px;height:11.8px;background:#37508a"></div>
<div class="abs" style="left:92px;top:123px;width:12.3px;height:11.8px;background:#3b5793"></div>
<div class="abs" style="left:104.3px;top:123px;width:54px;height:11.8px;background:#45619d"></div>
<div class="abs" style="left:158.3px;top:123px;width:11.7px;height:11.8px;background:#3b5793"></div>
<svg class="abs" style="left:95.8px;top:126.6px" width="4" height="5"><path d="M3.5,0 L3.5,4.6 L0.5,2.3z" fill="#fff"/></svg>
<svg class="abs" style="left:162.6px;top:126.6px" width="4" height="5"><path d="M0.5,0 L0.5,4.6 L3.5,2.3z" fill="#fff"/></svg>
<div class="t" style="left:107.6px;top:125.3px;color:#fff;font-weight:bold;font-size:6.9px;line-height:8px">Today: Mar 24</div>
<svg class="abs" style="left:155.5px;top:132px" width="3" height="3"><path d="M3,0 L3,3 L0,3z" fill="#7cc05a"/></svg>
<div class="abs" style="left:512.2px;top:123px;width:125.8px;height:11.8px;background:#3d5793"></div>
<div class="abs" style="left:548.6px;top:123px;width:0.6px;height:11.8px;background:#39528f"></div>
<div class="abs" style="left:606.5px;top:123px;width:0.6px;height:11.8px;background:#39528f"></div>
<svg class="abs" style="left:516px;top:126.8px" width="4" height="5"><path d="M0.3,0 L0.3,4.2 L3.3,2.1z" fill="#7cc05a"/></svg>
<div class="t" style="left:520.3px;top:125px;color:#fff;font-size:6.3px;line-height:8px">Up Next</div>
<svg class="abs" style="left:553px;top:126.2px" width="6" height="6"><circle cx="2.3" cy="2.3" r="1.7" stroke="#fff" stroke-width="0.8" fill="none"/><path d="M3.5,3.5 L5.5,5.5" stroke="#fff" stroke-width="1"/></svg>
<div class="t" style="left:561px;top:125px;color:#fff;font-size:6.3px;line-height:8px">Search Events</div>
<svg class="abs" style="left:612px;top:126.4px" width="5" height="5"><path d="M0,0.3 L4.6,0.3 L2.9,2.3 L2.9,4.8 L1.7,4.8 L1.7,2.3z" fill="#fff"/></svg>
<div class="t" style="left:618.3px;top:125px;color:#fff;font-size:6.3px;line-height:8px">Filter</div>
<div class="abs" style="left:92px;top:134.8px;width:546px;height:10px;background:#7686b4"></div>
<div class="t" style="left:81px;top:136.9px;width:60px;text-align:center;color:#e6eaf3;font-size:6.4px;line-height:8px;">Date</div>
<div class="t" style="left:124.69999999999999px;top:136.9px;width:60px;text-align:center;color:#e6eaf3;font-size:6.4px;line-height:8px;text-decoration:underline;text-decoration-color:#c6cde0">8:45am</div>
<div class="t" style="left:175.2px;top:136.9px;width:60px;text-align:center;color:#e6eaf3;font-size:6.4px;line-height:8px;">Currency</div>
<div class="t" style="left:208px;top:136.9px;width:60px;text-align:center;color:#e6eaf3;font-size:6.4px;line-height:8px;">Impact</div>
<div class="t" style="left:439.20000000000005px;top:136.9px;width:60px;text-align:center;color:#e6eaf3;font-size:6.4px;line-height:8px;">Detail</div>
<div class="t" style="left:477px;top:136.9px;width:60px;text-align:center;color:#e6eaf3;font-size:6.4px;line-height:8px;">Actual</div>
<div class="t" style="left:520.5px;top:136.9px;width:60px;text-align:center;color:#e6eaf3;font-size:6.4px;line-height:8px;">Forecast</div>
<div class="t" style="left:564px;top:136.9px;width:60px;text-align:center;color:#e6eaf3;font-size:6.4px;line-height:8px;">Previous</div>
<div class="t" style="left:596.6px;top:136.9px;width:60px;text-align:center;color:#e6eaf3;font-size:6.4px;line-height:8px;">Graph</div>
<div class="t" style="left:124.80000000000001px;top:148.31500000000003px;width:60px;text-align:center;color:#9a9a9a;font-size:6.6px;line-height:9px">3:00am</div>
<svg class="abs" style="left:180.8px;top:150.0px" width="4.4" height="5.6" viewBox="0 0 4.4 5.6"><rect x="0.4" y="0.4" width="3.6" height="4.8" rx="1.6" fill="none" stroke="#c9ccd3" stroke-width="0.7"/><path d="M1.2,0.9 Q0.5,2.8 1.2,4.7" stroke="#9ea2aa" stroke-width="0.9" fill="none"/></svg>
<div class="t" style="left:175.2px;top:148.21500000000003px;width:60px;text-align:center;color:#3a3a3a;font-size:6.3px;line-height:9px">GBP</div>
<div class="abs" style="left:234px;top:150.3px;width:7px;height:5.4px;background:#e8a040;border:0.5px solid #c98530"></div>
<div class="t" style="left:263.2px;top:148.31500000000003px;color:#333;font-size:6.3px;line-height:9px">Retail Sales m/m</div>
<svg class="abs" style="left:465px;top:147.8px" width="9" height="8" viewBox="0 0 9 8"><path d="M0.3,2 L0.3,7.6 L8.2,7.6 L8.2,2.5 L3.6,2.5 L3,1.5 L0.3,1.5z" fill="#f3d79a" stroke="#d3a954" stroke-width="0.5"/><rect x="3" y="0.3" width="5" height="4.2" fill="#dbe7f5" stroke="#8ba6cc" stroke-width="0.4"/><path d="M0.3,7.6 L1.8,3.8 L8.7,3.8 L8.2,7.6z" fill="#f7e1a8" stroke="#d3a954" stroke-width="0.4"/></svg>
<div class="t" style="left:477.20000000000005px;top:148.31500000000003px;width:60px;text-align:center;color:#6a9d52;font-size:6.6px;line-height:9px">1.2%</div>
<div class="t" style="left:520.7px;top:148.31500000000003px;width:60px;text-align:center;color:#333;font-size:6.6px;line-height:9px">0.2%</div>
<div class="t" style="left:562.6px;top:148.31500000000003px;width:60px;text-align:center;color:#6a9d52;font-size:6.6px;line-height:9px">0.9%</div>
<svg class="abs" style="left:601.3px;top:150.5px" width="3" height="4"><path d="M2.6,0 L2.6,3.6 L0.2,1.8z" fill="#e8a040"/></svg>
<svg class="abs" style="left:623px;top:148.70000000000002px" width="9" height="7" viewBox="0 0 9 7"><rect x="0.2" y="2.3" width="2.6" height="4.5" fill="#d8625c"/><rect x="2.8" y="0.3" width="3" height="6.5" fill="#5a86d0"/><rect x="5.8" y="3.6" width="2.4" height="3.2" fill="#5aa85a"/><rect x="0.2" y="6.2" width="8" height="0.8" fill="#3a4a78"/></svg>
<div class="abs" style="left:179px;top:158.63px;width:459px;height:0.6px;background:#eceef3"></div>
<div class="t" style="left:124.80000000000001px;top:162.54500000000002px;width:60px;text-align:center;color:#9a9a9a;font-size:6.6px;line-height:9px">4:15am</div>
<svg class="abs" style="left:180.8px;top:164.23px" width="4.4" height="5.6" viewBox="0 0 4.4 5.6"><rect x="0.4" y="0.4" width="3.6" height="4.8" rx="1.6" fill="none" stroke="#c9ccd3" stroke-width="0.7"/><path d="M1.2,0.9 Q0.5,2.8 1.2,4.7" stroke="#9ea2aa" stroke-width="0.9" fill="none"/></svg>
<div class="t" style="left:175.2px;top:162.44500000000002px;width:60px;text-align:center;color:#3a3a3a;font-size:6.3px;line-height:9px">EUR</div>
<div class="abs" style="left:234px;top:164.53px;width:7px;height:5.4px;background:#d42a1e;border:0.5px solid #b01a10"></div>
<div class="t" style="left:263.2px;top:162.54500000000002px;color:#333;font-size:6.3px;line-height:9px">French Flash Manufacturing PMI</div>
<svg class="abs" style="left:465px;top:162.03px" width="9" height="8" viewBox="0 0 9 8"><path d="M0.3,2 L0.3,7.6 L8.2,7.6 L8.2,2.5 L3.6,2.5 L3,1.5 L0.3,1.5z" fill="#f3d79a" stroke="#d3a954" stroke-width="0.5"/><rect x="3" y="0.3" width="5" height="4.2" fill="#dbe7f5" stroke="#8ba6cc" stroke-width="0.4"/><path d="M0.3,7.6 L1.8,3.8 L8.7,3.8 L8.2,7.6z" fill="#f7e1a8" stroke="#d3a954" stroke-width="0.4"/></svg>
<div class="t" style="left:477.20000000000005px;top:162.54500000000002px;width:60px;text-align:center;color:#c0504d;font-size:6.6px;line-height:9px">47.7</div>
<div class="t" style="left:520.7px;top:162.54500000000002px;width:60px;text-align:center;color:#333;font-size:6.6px;line-height:9px">48.1</div>
<div class="t" style="left:562.6px;top:162.54500000000002px;width:60px;text-align:center;color:#c0504d;font-size:6.6px;line-height:9px">47.4</div>
<svg class="abs" style="left:601.3px;top:164.73px" width="3" height="4"><path d="M2.6,0 L2.6,3.6 L0.2,1.8z" fill="#e8a040"/></svg>
<svg class="abs" style="left:623px;top:162.93px" width="9" height="7" viewBox="0 0 9 7"><rect x="0.2" y="2.3" width="2.6" height="4.5" fill="#d8625c"/><rect x="2.8" y="0.3" width="3" height="6.5" fill="#5a86d0"/><rect x="5.8" y="3.6" width="2.4" height="3.2" fill="#5aa85a"/><rect x="0.2" y="6.2" width="8" height="0.8" fill="#3a4a78"/></svg>
<div class="abs" style="left:179px;top:172.86px;width:459px;height:0.6px;background:#eef0f4"></div>
<svg class="abs" style="left:180.8px;top:178.46px" width="4.4" height="5.6" viewBox="0 0 4.4 5.6"><rect x="0.4" y="0.4" width="3.6" height="4.8" rx="1.6" fill="none" stroke="#c9ccd3" stroke-width="0.7"/><path d="M1.2,0.9 Q0.5,2.8 1.2,4.7" stroke="#9ea2aa" stroke-width="0.9" fill="none"/></svg>
<div class="t" style="left:175.2px;top:176.67500000000004px;width:60px;text-align:center;color:#3a3a3a;font-size:6.3px;line-height:9px">EUR</div>
<div class="abs" style="left:234px;top:178.76000000000002px;width:7px;height:5.4px;background:#d42a1e;border:0.5px solid #b01a10"></div>
<div class="t" style="left:263.2px;top:176.77500000000003px;color:#333;font-size:6.3px;line-height:9px">French Flash Services PMI</div>
<svg class="abs" style="left:465px;top:176.26000000000002px" width="9" height="8" viewBox="0 0 9 8"><path d="M0.3,2 L0.3,7.6 L8.2,7.6 L8.2,2.5 L3.6,2.5 L3,1.5 L0.3,1.5z" fill="#f3d79a" stroke="#d3a954" stroke-width="0.5"/><rect x="3" y="0.3" width="5" height="4.2" fill="#dbe7f5" stroke="#8ba6cc" stroke-width="0.4"/><path d="M0.3,7.6 L1.8,3.8 L8.7,3.8 L8.2,7.6z" fill="#f7e1a8" stroke="#d3a954" stroke-width="0.4"/></svg>
<div class="t" style="left:477.20000000000005px;top:176.77500000000003px;width:60px;text-align:center;color:#6a9d52;font-size:6.6px;line-height:9px">55.5</div>
<div class="t" style="left:520.7px;top:176.77500000000003px;width:60px;text-align:center;color:#333;font-size:6.6px;line-height:9px">52.4</div>
<div class="t" style="left:562.6px;top:176.77500000000003px;width:60px;text-align:center;color:#333;font-size:6.6px;line-height:9px">53.1</div>
<svg class="abs" style="left:601.3px;top:178.96px" width="3" height="4"><path d="M2.6,0 L2.6,3.6 L0.2,1.8z" fill="#e8a040"/></svg>
<svg class="abs" style="left:623px;top:177.16000000000003px" width="9" height="7" viewBox="0 0 9 7"><rect x="0.2" y="2.3" width="2.6" height="4.5" fill="#d8625c"/><rect x="2.8" y="0.3" width="3" height="6.5" fill="#5a86d0"/><rect x="5.8" y="3.6" width="2.4" height="3.2" fill="#5aa85a"/><rect x="0.2" y="6.2" width="8" height="0.8" fill="#3a4a78"/></svg>
<div class="abs" style="left:130px;top:187.09px;width:508px;height:0.7px;background:#e3e6eb"></div>
<div class="t" style="left:124.80000000000001px;top:191.00500000000002px;width:60px;text-align:center;color:#9a9a9a;font-size:6.6px;line-height:9px">4:30am</div>
<svg class="abs" style="left:180.8px;top:192.69px" width="4.4" height="5.6" viewBox="0 0 4.4 5.6"><rect x="0.4" y="0.4" width="3.6" height="4.8" rx="1.6" fill="none" stroke="#c9ccd3" stroke-width="0.7"/><path d="M1.2,0.9 Q0.5,2.8 1.2,4.7" stroke="#9ea2aa" stroke-width="0.9" fill="none"/></svg>
<div class="t" style="left:175.2px;top:190.90500000000003px;width:60px;text-align:center;color:#3a3a3a;font-size:6.3px;line-height:9px">EUR</div>
<div class="abs" style="left:234px;top:192.99px;width:7px;height:5.4px;background:#d42a1e;border:0.5px solid #b01a10"></div>
<div class="t" style="left:263.2px;top:191.00500000000002px;color:#333;font-size:6.3px;line-height:9px">German Flash Manufacturing PMI</div>
<svg class="abs" style="left:465px;top:190.49px" width="9" height="8" viewBox="0 0 9 8"><path d="M0.3,2 L0.3,7.6 L8.2,7.6 L8.2,2.5 L3.6,2.5 L3,1.5 L0.3,1.5z" fill="#f3d79a" stroke="#d3a954" stroke-width="0.5"/><rect x="3" y="0.3" width="5" height="4.2" fill="#dbe7f5" stroke="#8ba6cc" stroke-width="0.4"/><path d="M0.3,7.6 L1.8,3.8 L8.7,3.8 L8.2,7.6z" fill="#f7e1a8" stroke="#d3a954" stroke-width="0.4"/></svg>
<div class="t" style="left:477.20000000000005px;top:191.00500000000002px;width:60px;text-align:center;color:#c0504d;font-size:6.6px;line-height:9px">44.4</div>
<div class="t" style="left:520.7px;top:191.00500000000002px;width:60px;text-align:center;color:#333;font-size:6.6px;line-height:9px">47.1</div>
<div class="t" style="left:562.6px;top:191.00500000000002px;width:60px;text-align:center;color:#333;font-size:6.6px;line-height:9px">46.3</div>
<svg class="abs" style="left:601.3px;top:193.19px" width="3" height="4"><path d="M2.6,0 L2.6,3.6 L0.2,1.8z" fill="#e8a040"/></svg>
<svg class="abs" style="left:623px;top:191.39000000000001px" width="9" height="7" viewBox="0 0 9 7"><rect x="0.2" y="2.3" width="2.6" height="4.5" fill="#d8625c"/><rect x="2.8" y="0.3" width="3" height="6.5" fill="#5a86d0"/><rect x="5.8" y="3.6" width="2.4" height="3.2" fill="#5aa85a"/><rect x="0.2" y="6.2" width="8" height="0.8" fill="#3a4a78"/></svg>
<div class="abs" style="left:179px;top:201.32px;width:459px;height:0.6px;background:#eef0f4"></div>
<svg class="abs" style="left:180.8px;top:206.92px" width="4.4" height="5.6" viewBox="0 0 4.4 5.6"><rect x="0.4" y="0.4" width="3.6" height="4.8" rx="1.6" fill="none" stroke="#c9ccd3" stroke-width="0.7"/><path d="M1.2,0.9 Q0.5,2.8 1.2,4.7" stroke="#9ea2aa" stroke-width="0.9" fill="none"/></svg>
<div class="t" style="left:175.2px;top:205.13500000000002px;width:60px;text-align:center;color:#3a3a3a;font-size:6.3px;line-height:9px">EUR</div>
<div class="abs" style="left:234px;top:207.22px;width:7px;height:5.4px;background:#d42a1e;border:0.5px solid #b01a10"></div>
<div class="t" style="left:263.2px;top:205.235px;color:#333;font-size:6.3px;line-height:9px">German Flash Services PMI</div>
<svg class="abs" style="left:465px;top:204.72px" width="9" height="8" viewBox="0 0 9 8"><path d="M0.3,2 L0.3,7.6 L8.2,7.6 L8.2,2.5 L3.6,2.5 L3,1.5 L0.3,1.5z" fill="#f3d79a" stroke="#d3a954" stroke-width="0.5"/><rect x="3" y="0.3" width="5" height="4.2" fill="#dbe7f5" stroke="#8ba6cc" stroke-width="0.4"/><path d="M0.3,7.6 L1.8,3.8 L8.7,3.8 L8.2,7.6z" fill="#f7e1a8" stroke="#d3a954" stroke-width="0.4"/></svg>
<div class="t" style="left:477.20000000000005px;top:205.235px;width:60px;text-align:center;color:#6a9d52;font-size:6.6px;line-height:9px">53.9</div>
<div class="t" style="left:520.7px;top:205.235px;width:60px;text-align:center;color:#333;font-size:6.6px;line-height:9px">51.0</div>
<div class="t" style="left:562.6px;top:205.235px;width:60px;text-align:center;color:#c0504d;font-size:6.6px;line-height:9px">50.9</div>
<svg class="abs" style="left:601.3px;top:207.42px" width="3" height="4"><path d="M2.6,0 L2.6,3.6 L0.2,1.8z" fill="#e8a040"/></svg>
<svg class="abs" style="left:623px;top:205.62px" width="9" height="7" viewBox="0 0 9 7"><rect x="0.2" y="2.3" width="2.6" height="4.5" fill="#d8625c"/><rect x="2.8" y="0.3" width="3" height="6.5" fill="#5a86d0"/><rect x="5.8" y="3.6" width="2.4" height="3.2" fill="#5aa85a"/><rect x="0.2" y="6.2" width="8" height="0.8" fill="#3a4a78"/></svg>
<div class="abs" style="left:130px;top:215.55px;width:508px;height:0.7px;background:#e3e6eb"></div>
<div class="t" style="left:124.80000000000001px;top:219.46500000000003px;width:60px;text-align:center;color:#9a9a9a;font-size:6.6px;line-height:9px">5:00am</div>
<svg class="abs" style="left:180.8px;top:221.15px" width="4.4" height="5.6" viewBox="0 0 4.4 5.6"><rect x="0.4" y="0.4" width="3.6" height="4.8" rx="1.6" fill="none" stroke="#c9ccd3" stroke-width="0.7"/><path d="M1.2,0.9 Q0.5,2.8 1.2,4.7" stroke="#9ea2aa" stroke-width="0.9" fill="none"/></svg>
<div class="t" style="left:175.2px;top:219.36500000000004px;width:60px;text-align:center;color:#3a3a3a;font-size:6.3px;line-height:9px">EUR</div>
<div class="abs" style="left:234px;top:221.45000000000002px;width:7px;height:5.4px;background:#e8a040;border:0.5px solid #c98530"></div>
<div class="t" style="left:263.2px;top:219.46500000000003px;color:#333;font-size:6.3px;line-height:9px">Flash Manufacturing PMI</div>
<svg class="abs" style="left:465px;top:218.95000000000002px" width="9" height="8" viewBox="0 0 9 8"><path d="M0.3,2 L0.3,7.6 L8.2,7.6 L8.2,2.5 L3.6,2.5 L3,1.5 L0.3,1.5z" fill="#f3d79a" stroke="#d3a954" stroke-width="0.5"/><rect x="3" y="0.3" width="5" height="4.2" fill="#dbe7f5" stroke="#8ba6cc" stroke-width="0.4"/><path d="M0.3,7.6 L1.8,3.8 L8.7,3.8 L8.2,7.6z" fill="#f7e1a8" stroke="#d3a954" stroke-width="0.4"/></svg>
<div class="t" style="left:477.20000000000005px;top:219.46500000000003px;width:60px;text-align:center;color:#c0504d;font-size:6.6px;line-height:9px">47.1</div>
<div class="t" style="left:520.7px;top:219.46500000000003px;width:60px;text-align:center;color:#333;font-size:6.6px;line-height:9px">48.9</div>
<div class="t" style="left:562.6px;top:219.46500000000003px;width:60px;text-align:center;color:#333;font-size:6.6px;line-height:9px">48.5</div>
<svg class="abs" style="left:601.3px;top:221.65px" width="3" height="4"><path d="M2.6,0 L2.6,3.6 L0.2,1.8z" fill="#e8a040"/></svg>
<svg class="abs" style="left:623px;top:219.85000000000002px" width="9" height="7" viewBox="0 0 9 7"><rect x="0.2" y="2.3" width="2.6" height="4.5" fill="#d8625c"/><rect x="2.8" y="0.3" width="3" height="6.5" fill="#5a86d0"/><rect x="5.8" y="3.6" width="2.4" height="3.2" fill="#5aa85a"/><rect x="0.2" y="6.2" width="8" height="0.8" fill="#3a4a78"/></svg>
<div class="abs" style="left:179px;top:229.78px;width:459px;height:0.6px;background:#eef0f4"></div>
<svg class="abs" style="left:180.8px;top:235.38px" width="4.4" height="5.6" viewBox="0 0 4.4 5.6"><rect x="0.4" y="0.4" width="3.6" height="4.8" rx="1.6" fill="none" stroke="#c9ccd3" stroke-width="0.7"/><path d="M1.2,0.9 Q0.5,2.8 1.2,4.7" stroke="#9ea2aa" stroke-width="0.9" fill="none"/></svg>
<div class="t" style="left:175.2px;top:233.59500000000003px;width:60px;text-align:center;color:#3a3a3a;font-size:6.3px;line-height:9px">EUR</div>
<div class="abs" style="left:234px;top:235.68px;width:7px;height:5.4px;background:#e8a040;border:0.5px solid #c98530"></div>
<div class="t" style="left:263.2px;top:233.69500000000002px;color:#333;font-size:6.3px;line-height:9px">Flash Services PMI</div>
<svg class="abs" style="left:465px;top:233.18px" width="9" height="8" viewBox="0 0 9 8"><path d="M0.3,2 L0.3,7.6 L8.2,7.6 L8.2,2.5 L3.6,2.5 L3,1.5 L0.3,1.5z" fill="#f3d79a" stroke="#d3a954" stroke-width="0.5"/><rect x="3" y="0.3" width="5" height="4.2" fill="#dbe7f5" stroke="#8ba6cc" stroke-width="0.4"/><path d="M0.3,7.6 L1.8,3.8 L8.7,3.8 L8.2,7.6z" fill="#f7e1a8" stroke="#d3a954" stroke-width="0.4"/></svg>
<div class="t" style="left:477.20000000000005px;top:233.69500000000002px;width:60px;text-align:center;color:#6a9d52;font-size:6.6px;line-height:9px">55.6</div>
<div class="t" style="left:520.7px;top:233.69500000000002px;width:60px;text-align:center;color:#333;font-size:6.6px;line-height:9px">52.6</div>
<div class="t" style="left:562.6px;top:233.69500000000002px;width:60px;text-align:center;color:#333;font-size:6.6px;line-height:9px">52.7</div>
<svg class="abs" style="left:601.3px;top:235.88px" width="3" height="4"><path d="M2.6,0 L2.6,3.6 L0.2,1.8z" fill="#e8a040"/></svg>
<svg class="abs" style="left:623px;top:234.08px" width="9" height="7" viewBox="0 0 9 7"><rect x="0.2" y="2.3" width="2.6" height="4.5" fill="#d8625c"/><rect x="2.8" y="0.3" width="3" height="6.5" fill="#5a86d0"/><rect x="5.8" y="3.6" width="2.4" height="3.2" fill="#5aa85a"/><rect x="0.2" y="6.2" width="8" height="0.8" fill="#3a4a78"/></svg>
<div class="abs" style="left:130px;top:244.01px;width:508px;height:0.7px;background:#e3e6eb"></div>
<div class="t" style="left:124.80000000000001px;top:247.925px;width:60px;text-align:center;color:#9a9a9a;font-size:6.6px;line-height:9px">5:15am</div>
<svg class="abs" style="left:180.8px;top:249.60999999999999px" width="4.4" height="5.6" viewBox="0 0 4.4 5.6"><rect x="0.4" y="0.4" width="3.6" height="4.8" rx="1.6" fill="none" stroke="#c9ccd3" stroke-width="0.7"/><path d="M1.2,0.9 Q0.5,2.8 1.2,4.7" stroke="#9ea2aa" stroke-width="0.9" fill="none"/></svg>
<div class="t" style="left:175.2px;top:247.82500000000002px;width:60px;text-align:center;color:#3a3a3a;font-size:6.3px;line-height:9px">EUR</div>
<div class="abs" style="left:234px;top:249.91px;width:7px;height:5.4px;background:#eed555;border:0.5px solid #d9bb30"></div>
<div class="t" style="left:263.2px;top:247.925px;color:#333;font-size:6.3px;line-height:9px">German Buba President Nagel Speaks</div>
<svg class="abs" style="left:465px;top:247.41px" width="9" height="8" viewBox="0 0 9 8"><path d="M0.3,2 L0.3,7.6 L8.2,7.6 L8.2,2.5 L3.6,2.5 L3,1.5 L0.3,1.5z" fill="#f3d79a" stroke="#d3a954" stroke-width="0.5"/><rect x="3" y="0.3" width="5" height="4.2" fill="#dbe7f5" stroke="#8ba6cc" stroke-width="0.4"/><path d="M0.3,7.6 L1.8,3.8 L8.7,3.8 L8.2,7.6z" fill="#f7e1a8" stroke="#d3a954" stroke-width="0.4"/></svg>
<div class="abs" style="left:130px;top:258.24px;width:508px;height:0.7px;background:#e3e6eb"></div>
<div class="t" style="left:124.80000000000001px;top:262.15500000000003px;width:60px;text-align:center;color:#9a9a9a;font-size:6.6px;line-height:9px">5:30am</div>
<svg class="abs" style="left:180.8px;top:263.84000000000003px" width="4.4" height="5.6" viewBox="0 0 4.4 5.6"><rect x="0.4" y="0.4" width="3.6" height="4.8" rx="1.6" fill="none" stroke="#c9ccd3" stroke-width="0.7"/><path d="M1.2,0.9 Q0.5,2.8 1.2,4.7" stroke="#9ea2aa" stroke-width="0.9" fill="none"/></svg>
<div class="t" style="left:175.2px;top:262.055px;width:60px;text-align:center;color:#3a3a3a;font-size:6.3px;line-height:9px">GBP</div>
<div class="abs" style="left:234px;top:264.14px;width:7px;height:5.4px;background:#d42a1e;border:0.5px solid #b01a10"></div>
<div class="t" style="left:263.2px;top:262.15500000000003px;color:#333;font-size:6.3px;line-height:9px">Flash Manufacturing PMI</div>
<svg class="abs" style="left:465px;top:261.64px" width="9" height="8" viewBox="0 0 9 8"><path d="M0.3,2 L0.3,7.6 L8.2,7.6 L8.2,2.5 L3.6,2.5 L3,1.5 L0.3,1.5z" fill="#f3d79a" stroke="#d3a954" stroke-width="0.5"/><rect x="3" y="0.3" width="5" height="4.2" fill="#dbe7f5" stroke="#8ba6cc" stroke-width="0.4"/><path d="M0.3,7.6 L1.8,3.8 L8.7,3.8 L8.2,7.6z" fill="#f7e1a8" stroke="#d3a954" stroke-width="0.4"/></svg>
<div class="t" style="left:477.20000000000005px;top:262.15500000000003px;width:60px;text-align:center;color:#c0504d;font-size:6.6px;line-height:9px">48.0</div>
<div class="t" style="left:520.7px;top:262.15500000000003px;width:60px;text-align:center;color:#333;font-size:6.6px;line-height:9px">49.8</div>
<div class="t" style="left:562.6px;top:262.15500000000003px;width:60px;text-align:center;color:#333;font-size:6.6px;line-height:9px">49.3</div>
<svg class="abs" style="left:601.3px;top:264.34000000000003px" width="3" height="4"><path d="M2.6,0 L2.6,3.6 L0.2,1.8z" fill="#e8a040"/></svg>
<svg class="abs" style="left:623px;top:262.54px" width="9" height="7" viewBox="0 0 9 7"><rect x="0.2" y="2.3" width="2.6" height="4.5" fill="#d8625c"/><rect x="2.8" y="0.3" width="3" height="6.5" fill="#5a86d0"/><rect x="5.8" y="3.6" width="2.4" height="3.2" fill="#5aa85a"/><rect x="0.2" y="6.2" width="8" height="0.8" fill="#3a4a78"/></svg>
<div class="abs" style="left:179px;top:272.47px;width:459px;height:0.6px;background:#eef0f4"></div>
<svg class="abs" style="left:180.8px;top:278.07000000000005px" width="4.4" height="5.6" viewBox="0 0 4.4 5.6"><rect x="0.4" y="0.4" width="3.6" height="4.8" rx="1.6" fill="none" stroke="#c9ccd3" stroke-width="0.7"/><path d="M1.2,0.9 Q0.5,2.8 1.2,4.7" stroke="#9ea2aa" stroke-width="0.9" fill="none"/></svg>
<div class="t" style="left:175.2px;top:276.285px;width:60px;text-align:center;color:#3a3a3a;font-size:6.3px;line-height:9px">GBP</div>
<div class="abs" style="left:234px;top:278.37px;width:7px;height:5.4px;background:#d42a1e;border:0.5px solid #b01a10"></div>
<div class="t" style="left:263.2px;top:276.38500000000005px;color:#333;font-size:6.3px;line-height:9px">Flash Services PMI</div>
<svg class="abs" style="left:465px;top:275.87px" width="9" height="8" viewBox="0 0 9 8"><path d="M0.3,2 L0.3,7.6 L8.2,7.6 L8.2,2.5 L3.6,2.5 L3,1.5 L0.3,1.5z" fill="#f3d79a" stroke="#d3a954" stroke-width="0.5"/><rect x="3" y="0.3" width="5" height="4.2" fill="#dbe7f5" stroke="#8ba6cc" stroke-width="0.4"/><path d="M0.3,7.6 L1.8,3.8 L8.7,3.8 L8.2,7.6z" fill="#f7e1a8" stroke="#d3a954" stroke-width="0.4"/></svg>
<div class="t" style="left:477.20000000000005px;top:276.38500000000005px;width:60px;text-align:center;color:#333;font-size:6.6px;line-height:9px">52.8</div>
<div class="t" style="left:520.7px;top:276.38500000000005px;width:60px;text-align:center;color:#333;font-size:6.6px;line-height:9px">53.1</div>
<div class="t" style="left:562.6px;top:276.38500000000005px;width:60px;text-align:center;color:#333;font-size:6.6px;line-height:9px">53.5</div>
<svg class="abs" style="left:601.3px;top:278.57000000000005px" width="3" height="4"><path d="M2.6,0 L2.6,3.6 L0.2,1.8z" fill="#e8a040"/></svg>
<svg class="abs" style="left:623px;top:276.77000000000004px" width="9" height="7" viewBox="0 0 9 7"><rect x="0.2" y="2.3" width="2.6" height="4.5" fill="#d8625c"/><rect x="2.8" y="0.3" width="3" height="6.5" fill="#5a86d0"/><rect x="5.8" y="3.6" width="2.4" height="3.2" fill="#5aa85a"/><rect x="0.2" y="6.2" width="8" height="0.8" fill="#3a4a78"/></svg>
<div class="abs" style="left:130px;top:286.70000000000005px;width:508px;height:0.7px;background:#e3e6eb"></div>
<div class="t" style="left:124.80000000000001px;top:290.61500000000007px;width:60px;text-align:center;color:#333;font-size:6.6px;line-height:9px">All Day</div>
<div class="t" style="left:175.2px;top:290.51500000000004px;width:60px;text-align:center;color:#3a3a3a;font-size:6.3px;line-height:9px">EUR</div>
<div class="abs" style="left:234px;top:292.6px;width:7px;height:5.4px;background:#d42a1e;border:0.5px solid #b01a10"></div>
<div class="t" style="left:263.2px;top:290.61500000000007px;color:#333;font-size:6.3px;line-height:9px">Euro Summit</div>
<svg class="abs" style="left:465px;top:290.70000000000005px" width="9" height="7" viewBox="0 0 9 7"><path d="M0.3,1 L0.3,6.6 L8.4,6.6 L8.4,1.6 L3.6,1.6 L3,0.6 L0.3,0.6z" fill="#f3d79a" stroke="#d3a954" stroke-width="0.5"/><path d="M0.3,6.6 L1.6,2.6 L8.8,2.6 L8.4,6.6z" fill="#f8e3ae" stroke="#d3a954" stroke-width="0.4"/></svg>
<div class="abs" style="left:179px;top:300.93px;width:459px;height:0.6px;background:#eef0f4"></div>
<div class="t" style="left:124.80000000000001px;top:304.845px;width:60px;text-align:center;color:#9a9a9a;font-size:6.6px;line-height:9px">8:30am</div>
<svg class="abs" style="left:180.8px;top:306.53000000000003px" width="4.4" height="5.6" viewBox="0 0 4.4 5.6"><rect x="0.4" y="0.4" width="3.6" height="4.8" rx="1.6" fill="none" stroke="#c9ccd3" stroke-width="0.7"/><path d="M1.2,0.9 Q0.5,2.8 1.2,4.7" stroke="#9ea2aa" stroke-width="0.9" fill="none"/></svg>
<div class="t" style="left:175.2px;top:304.745px;width:60px;text-align:center;color:#3a3a3a;font-size:6.3px;line-height:9px">CAD</div>
<div class="abs" style="left:234px;top:306.83px;width:7px;height:5.4px;background:#e8a040;border:0.5px solid #c98530"></div>
<div class="t" style="left:263.2px;top:304.845px;color:#333;font-size:6.3px;line-height:9px">Core Retail Sales m/m</div>
<svg class="abs" style="left:465px;top:304.33px" width="9" height="8" viewBox="0 0 9 8"><path d="M0.3,2 L0.3,7.6 L8.2,7.6 L8.2,2.5 L3.6,2.5 L3,1.5 L0.3,1.5z" fill="#f3d79a" stroke="#d3a954" stroke-width="0.5"/><rect x="3" y="0.3" width="5" height="4.2" fill="#dbe7f5" stroke="#8ba6cc" stroke-width="0.4"/><path d="M0.3,7.6 L1.8,3.8 L8.7,3.8 L8.2,7.6z" fill="#f7e1a8" stroke="#d3a954" stroke-width="0.4"/></svg>
<div class="t" style="left:477.20000000000005px;top:304.845px;width:60px;text-align:center;color:#6a9d52;font-size:6.6px;line-height:9px">0.9%</div>
<div class="t" style="left:520.7px;top:304.845px;width:60px;text-align:center;color:#333;font-size:6.6px;line-height:9px">0.6%</div>
<div class="t" style="left:562.6px;top:304.845px;width:60px;text-align:center;color:#333;font-size:6.6px;line-height:9px">-0.6%</div>
<svg class="abs" style="left:623px;top:305.23px" width="9" height="7" viewBox="0 0 9 7"><rect x="0.2" y="2.3" width="2.6" height="4.5" fill="#d8625c"/><rect x="2.8" y="0.3" width="3" height="6.5" fill="#5a86d0"/><rect x="5.8" y="3.6" width="2.4" height="3.2" fill="#5aa85a"/><rect x="0.2" y="6.2" width="8" height="0.8" fill="#3a4a78"/></svg>
<div class="abs" style="left:179px;top:315.15999999999997px;width:459px;height:0.6px;background:#eef0f4"></div>
<svg class="abs" style="left:180.8px;top:320.76px" width="4.4" height="5.6" viewBox="0 0 4.4 5.6"><rect x="0.4" y="0.4" width="3.6" height="4.8" rx="1.6" fill="none" stroke="#c9ccd3" stroke-width="0.7"/><path d="M1.2,0.9 Q0.5,2.8 1.2,4.7" stroke="#9ea2aa" stroke-width="0.9" fill="none"/></svg>
<div class="t" style="left:175.2px;top:318.97499999999997px;width:60px;text-align:center;color:#3a3a3a;font-size:6.3px;line-height:9px">CAD</div>
<div class="abs" style="left:234px;top:321.05999999999995px;width:7px;height:5.4px;background:#e8a040;border:0.5px solid #c98530"></div>
<div class="t" style="left:263.2px;top:319.075px;color:#333;font-size:6.3px;line-height:9px">Retail Sales m/m</div>
<svg class="abs" style="left:465px;top:318.55999999999995px" width="9" height="8" viewBox="0 0 9 8"><path d="M0.3,2 L0.3,7.6 L8.2,7.6 L8.2,2.5 L3.6,2.5 L3,1.5 L0.3,1.5z" fill="#f3d79a" stroke="#d3a954" stroke-width="0.5"/><rect x="3" y="0.3" width="5" height="4.2" fill="#dbe7f5" stroke="#8ba6cc" stroke-width="0.4"/><path d="M0.3,7.6 L1.8,3.8 L8.7,3.8 L8.2,7.6z" fill="#f7e1a8" stroke="#d3a954" stroke-width="0.4"/></svg>
<div class="t" style="left:477.20000000000005px;top:319.075px;width:60px;text-align:center;color:#6a9d52;font-size:6.6px;line-height:9px">1.4%</div>
<div class="t" style="left:520.7px;top:319.075px;width:60px;text-align:center;color:#333;font-size:6.6px;line-height:9px">0.7%</div>
<div class="t" style="left:562.6px;top:319.075px;width:60px;text-align:center;color:#333;font-size:6.6px;line-height:9px">0.5%</div>
<svg class="abs" style="left:623px;top:319.46px" width="9" height="7" viewBox="0 0 9 7"><rect x="0.2" y="2.3" width="2.6" height="4.5" fill="#d8625c"/><rect x="2.8" y="0.3" width="3" height="6.5" fill="#5a86d0"/><rect x="5.8" y="3.6" width="2.4" height="3.2" fill="#5aa85a"/><rect x="0.2" y="6.2" width="8" height="0.8" fill="#3a4a78"/></svg>
<div class="abs" style="left:179px;top:329.39px;width:459px;height:0.6px;background:#eef0f4"></div>
<svg class="abs" style="left:180.8px;top:334.99px" width="4.4" height="5.6" viewBox="0 0 4.4 5.6"><rect x="0.4" y="0.4" width="3.6" height="4.8" rx="1.6" fill="none" stroke="#c9ccd3" stroke-width="0.7"/><path d="M1.2,0.9 Q0.5,2.8 1.2,4.7" stroke="#9ea2aa" stroke-width="0.9" fill="none"/></svg>
<div class="t" style="left:175.2px;top:333.205px;width:60px;text-align:center;color:#3a3a3a;font-size:6.3px;line-height:9px">USD</div>
<div class="abs" style="left:234px;top:335.28999999999996px;width:7px;height:5.4px;background:#e8a040;border:0.5px solid #c98530"></div>
<div class="t" style="left:263.2px;top:333.305px;color:#333;font-size:6.3px;line-height:9px">Core Durable Goods Orders m/m</div>
<svg class="abs" style="left:465px;top:332.78999999999996px" width="9" height="8" viewBox="0 0 9 8"><path d="M0.3,2 L0.3,7.6 L8.2,7.6 L8.2,2.5 L3.6,2.5 L3,1.5 L0.3,1.5z" fill="#f3d79a" stroke="#d3a954" stroke-width="0.5"/><rect x="3" y="0.3" width="5" height="4.2" fill="#dbe7f5" stroke="#8ba6cc" stroke-width="0.4"/><path d="M0.3,7.6 L1.8,3.8 L8.7,3.8 L8.2,7.6z" fill="#f7e1a8" stroke="#d3a954" stroke-width="0.4"/></svg>
<div class="t" style="left:477.20000000000005px;top:333.305px;width:60px;text-align:center;color:#c0504d;font-size:6.6px;line-height:9px">0.0%</div>
<div class="t" style="left:520.7px;top:333.305px;width:60px;text-align:center;color:#333;font-size:6.6px;line-height:9px">0.2%</div>
<div class="t" style="left:562.6px;top:333.305px;width:60px;text-align:center;color:#333;font-size:6.6px;line-height:9px">0.8%</div>
<svg class="abs" style="left:601.3px;top:335.49px" width="3" height="4"><path d="M2.6,0 L2.6,3.6 L0.2,1.8z" fill="#e8a040"/></svg>
<svg class="abs" style="left:623px;top:333.69px" width="9" height="7" viewBox="0 0 9 7"><rect x="0.2" y="2.3" width="2.6" height="4.5" fill="#d8625c"/><rect x="2.8" y="0.3" width="3" height="6.5" fill="#5a86d0"/><rect x="5.8" y="3.6" width="2.4" height="3.2" fill="#5aa85a"/><rect x="0.2" y="6.2" width="8" height="0.8" fill="#3a4a78"/></svg>
<div class="abs" style="left:179px;top:343.62px;width:459px;height:0.6px;background:#eef0f4"></div>
<svg class="abs" style="left:180.8px;top:349.22px" width="4.4" height="5.6" viewBox="0 0 4.4 5.6"><rect x="0.4" y="0.4" width="3.6" height="4.8" rx="1.6" fill="none" stroke="#c9ccd3" stroke-width="0.7"/><path d="M1.2,0.9 Q0.5,2.8 1.2,4.7" stroke="#9ea2aa" stroke-width="0.9" fill="none"/></svg>
<div class="t" style="left:175.2px;top:347.435px;width:60px;text-align:center;color:#3a3a3a;font-size:6.3px;line-height:9px">USD</div>
<div class="abs" style="left:234px;top:349.52px;width:7px;height:5.4px;background:#e8a040;border:0.5px solid #c98530"></div>
<div class="t" style="left:263.2px;top:347.535px;color:#333;font-size:6.3px;line-height:9px">Durable Goods Orders m/m</div>
<svg class="abs" style="left:465px;top:347.02px" width="9" height="8" viewBox="0 0 9 8"><path d="M0.3,2 L0.3,7.6 L8.2,7.6 L8.2,2.5 L3.6,2.5 L3,1.5 L0.3,1.5z" fill="#f3d79a" stroke="#d3a954" stroke-width="0.5"/><rect x="3" y="0.3" width="5" height="4.2" fill="#dbe7f5" stroke="#8ba6cc" stroke-width="0.4"/><path d="M0.3,7.6 L1.8,3.8 L8.7,3.8 L8.2,7.6z" fill="#f7e1a8" stroke="#d3a954" stroke-width="0.4"/></svg>
<div class="t" style="left:477.20000000000005px;top:347.535px;width:60px;text-align:center;color:#c0504d;font-size:6.6px;line-height:9px">-1.0%</div>
<div class="t" style="left:520.7px;top:347.535px;width:60px;text-align:center;color:#333;font-size:6.6px;line-height:9px">0.4%</div>
<div class="t" style="left:562.6px;top:347.535px;width:60px;text-align:center;color:#c0504d;font-size:6.6px;line-height:9px">-5.0%</div>
<svg class="abs" style="left:601.3px;top:349.72px" width="3" height="4"><path d="M2.6,0 L2.6,3.6 L0.2,1.8z" fill="#e8a040"/></svg>
<svg class="abs" style="left:623px;top:347.92px" width="9" height="7" viewBox="0 0 9 7"><rect x="0.2" y="2.3" width="2.6" height="4.5" fill="#d8625c"/><rect x="2.8" y="0.3" width="3" height="6.5" fill="#5a86d0"/><rect x="5.8" y="3.6" width="2.4" height="3.2" fill="#5aa85a"/><rect x="0.2" y="6.2" width="8" height="0.8" fill="#3a4a78"/></svg>
<div class="abs" style="left:130px;top:357.85px;width:508px;height:0.7px;background:#e3e6eb"></div>
<div class="t" style="left:124.80000000000001px;top:361.76500000000004px;width:60px;text-align:center;color:#333;font-size:6.6px;line-height:9px">9:45am</div>
<svg class="abs" style="left:141.3px;top:363.35px" width="4" height="5"><path d="M0.3,0 L0.3,4 L3.3,2z" fill="#6ab04c"/></svg>
<svg class="abs" style="left:180.8px;top:363.45000000000005px" width="4.4" height="5.6" viewBox="0 0 4.4 5.6"><rect x="0.4" y="0.4" width="3.6" height="4.8" rx="1.6" fill="none" stroke="#c9ccd3" stroke-width="0.7"/><path d="M1.2,0.9 Q0.5,2.8 1.2,4.7" stroke="#9ea2aa" stroke-width="0.9" fill="none"/></svg>
<div class="t" style="left:175.2px;top:361.665px;width:60px;text-align:center;color:#3a3a3a;font-size:6.3px;line-height:9px">USD</div>
<div class="abs" style="left:234px;top:363.75px;width:7px;height:5.4px;background:#d42a1e;border:0.5px solid #b01a10"></div>
<div class="t" style="left:263.2px;top:361.76500000000004px;color:#333;font-size:6.3px;line-height:9px">Flash Manufacturing PMI</div>
<svg class="abs" style="left:465px;top:361.85px" width="9" height="7" viewBox="0 0 9 7"><path d="M0.3,1 L0.3,6.6 L8.4,6.6 L8.4,1.6 L3.6,1.6 L3,0.6 L0.3,0.6z" fill="#f3d79a" stroke="#d3a954" stroke-width="0.5"/><path d="M0.3,6.6 L1.6,2.6 L8.8,2.6 L8.4,6.6z" fill="#f8e3ae" stroke="#d3a954" stroke-width="0.4"/></svg>
<div class="t" style="left:520.7px;top:361.76500000000004px;width:60px;text-align:center;color:#333;font-size:6.6px;line-height:9px">47.0</div>
<div class="t" style="left:562.6px;top:361.76500000000004px;width:60px;text-align:center;color:#c0504d;font-size:6.6px;line-height:9px">47.3</div>
<svg class="abs" style="left:601.3px;top:363.95000000000005px" width="3" height="4"><path d="M2.6,0 L2.6,3.6 L0.2,1.8z" fill="#e8a040"/></svg>
<svg class="abs" style="left:623px;top:362.15000000000003px" width="9" height="7" viewBox="0 0 9 7"><rect x="0.2" y="2.3" width="2.6" height="4.5" fill="#d8625c"/><rect x="2.8" y="0.3" width="3" height="6.5" fill="#5a86d0"/><rect x="5.8" y="3.6" width="2.4" height="3.2" fill="#5aa85a"/><rect x="0.2" y="6.2" width="8" height="0.8" fill="#3a4a78"/></svg>
<div class="abs" style="left:179px;top:372.08000000000004px;width:459px;height:0.6px;background:#eef0f4"></div>
<svg class="abs" style="left:180.8px;top:377.68000000000006px" width="4.4" height="5.6" viewBox="0 0 4.4 5.6"><rect x="0.4" y="0.4" width="3.6" height="4.8" rx="1.6" fill="none" stroke="#c9ccd3" stroke-width="0.7"/><path d="M1.2,0.9 Q0.5,2.8 1.2,4.7" stroke="#9ea2aa" stroke-width="0.9" fill="none"/></svg>
<div class="t" style="left:175.2px;top:375.89500000000004px;width:60px;text-align:center;color:#3a3a3a;font-size:6.3px;line-height:9px">USD</div>
<div class="abs" style="left:234px;top:377.98px;width:7px;height:5.4px;background:#d42a1e;border:0.5px solid #b01a10"></div>
<div class="t" style="left:263.2px;top:375.99500000000006px;color:#333;font-size:6.3px;line-height:9px">Flash Services PMI</div>
<svg class="abs" style="left:465px;top:376.08000000000004px" width="9" height="7" viewBox="0 0 9 7"><path d="M0.3,1 L0.3,6.6 L8.4,6.6 L8.4,1.6 L3.6,1.6 L3,0.6 L0.3,0.6z" fill="#f3d79a" stroke="#d3a954" stroke-width="0.5"/><path d="M0.3,6.6 L1.6,2.6 L8.8,2.6 L8.4,6.6z" fill="#f8e3ae" stroke="#d3a954" stroke-width="0.4"/></svg>
<div class="t" style="left:520.7px;top:375.99500000000006px;width:60px;text-align:center;color:#333;font-size:6.6px;line-height:9px">50.3</div>
<div class="t" style="left:562.6px;top:375.99500000000006px;width:60px;text-align:center;color:#333;font-size:6.6px;line-height:9px">50.6</div>
<svg class="abs" style="left:601.3px;top:378.18000000000006px" width="3" height="4"><path d="M2.6,0 L2.6,3.6 L0.2,1.8z" fill="#e8a040"/></svg>
<svg class="abs" style="left:623px;top:376.38000000000005px" width="9" height="7" viewBox="0 0 9 7"><rect x="0.2" y="2.3" width="2.6" height="4.5" fill="#d8625c"/><rect x="2.8" y="0.3" width="3" height="6.5" fill="#5a86d0"/><rect x="5.8" y="3.6" width="2.4" height="3.2" fill="#5aa85a"/><rect x="0.2" y="6.2" width="8" height="0.8" fill="#3a4a78"/></svg>
<div class="abs" style="left:130px;top:386.31px;width:508px;height:0.7px;background:#e3e6eb"></div>
<div class="t" style="left:124.80000000000001px;top:390.225px;width:60px;text-align:center;color:#333;font-size:6.6px;line-height:9px">10:00am</div>
<svg class="abs" style="left:180.8px;top:391.91px" width="4.4" height="5.6" viewBox="0 0 4.4 5.6"><rect x="0.4" y="0.4" width="3.6" height="4.8" rx="1.6" fill="none" stroke="#c9ccd3" stroke-width="0.7"/><path d="M1.2,0.9 Q0.5,2.8 1.2,4.7" stroke="#9ea2aa" stroke-width="0.9" fill="none"/></svg>
<div class="t" style="left:175.2px;top:390.125px;width:60px;text-align:center;color:#3a3a3a;font-size:6.3px;line-height:9px">EUR</div>
<div class="abs" style="left:234px;top:392.21px;width:7px;height:5.4px;background:#eed555;border:0.5px solid #d9bb30"></div>
<div class="t" style="left:263.2px;top:390.225px;color:#333;font-size:6.3px;line-height:9px">Belgian NBB Business Climate</div>
<svg class="abs" style="left:465px;top:390.31px" width="9" height="7" viewBox="0 0 9 7"><path d="M0.3,1 L0.3,6.6 L8.4,6.6 L8.4,1.6 L3.6,1.6 L3,0.6 L0.3,0.6z" fill="#f3d79a" stroke="#d3a954" stroke-width="0.5"/><path d="M0.3,6.6 L1.6,2.6 L8.8,2.6 L8.4,6.6z" fill="#f8e3ae" stroke="#d3a954" stroke-width="0.4"/></svg>
<div class="t" style="left:520.7px;top:390.225px;width:60px;text-align:center;color:#333;font-size:6.6px;line-height:9px">-12.5</div>
<div class="t" style="left:562.6px;top:390.225px;width:60px;text-align:center;color:#333;font-size:6.6px;line-height:9px">-12.8</div>
<svg class="abs" style="left:623px;top:390.61px" width="9" height="7" viewBox="0 0 9 7"><rect x="0.2" y="2.3" width="2.6" height="4.5" fill="#d8625c"/><rect x="2.8" y="0.3" width="3" height="6.5" fill="#5a86d0"/><rect x="5.8" y="3.6" width="2.4" height="3.2" fill="#5aa85a"/><rect x="0.2" y="6.2" width="8" height="0.8" fill="#3a4a78"/></svg>
<div class="abs" style="left:130px;top:400.53999999999996px;width:508px;height:0.7px;background:#e3e6eb"></div>
<div class="t" style="left:124.80000000000001px;top:404.455px;width:60px;text-align:center;color:#333;font-size:6.6px;line-height:9px">10:30am</div>
<svg class="abs" style="left:180.8px;top:406.14px" width="4.4" height="5.6" viewBox="0 0 4.4 5.6"><rect x="0.4" y="0.4" width="3.6" height="4.8" rx="1.6" fill="none" stroke="#c9ccd3" stroke-width="0.7"/><path d="M1.2,0.9 Q0.5,2.8 1.2,4.7" stroke="#9ea2aa" stroke-width="0.9" fill="none"/></svg>
<div class="t" style="left:175.2px;top:404.35499999999996px;width:60px;text-align:center;color:#3a3a3a;font-size:6.3px;line-height:9px">GBP</div>
<div class="abs" style="left:234px;top:406.43999999999994px;width:7px;height:5.4px;background:#eed555;border:0.5px solid #d9bb30"></div>
<div class="t" style="left:263.2px;top:404.455px;color:#333;font-size:6.3px;line-height:9px">MPC Member Mann Speaks</div>
<svg class="abs" style="left:465px;top:404.53999999999996px" width="9" height="7" viewBox="0 0 9 7"><path d="M0.3,1 L0.3,6.6 L8.4,6.6 L8.4,1.6 L3.6,1.6 L3,0.6 L0.3,0.6z" fill="#f3d79a" stroke="#d3a954" stroke-width="0.5"/><path d="M0.3,6.6 L1.6,2.6 L8.8,2.6 L8.4,6.6z" fill="#f8e3ae" stroke="#d3a954" stroke-width="0.4"/></svg>
<div class="abs" style="left:130px;top:144.9px;width:0.6px;height:270.4px;background:#eceef3"></div>
<div class="t" style="left:81px;top:148.1px;width:60px;text-align:center;color:#333;font-size:6.6px;line-height:9px">Fri</div>
<div class="t" style="left:81px;top:156.7px;width:60px;text-align:center;color:#333;font-size:6.6px;line-height:9px">Mar 24</div>
<div class="abs" style="left:92px;top:415.3px;width:546px;height:10.7px;background:#e4e7ec"></div>
<div class="t" style="left:96px;top:416.5px;color:#4a5a7a;font-size:6.4px;line-height:9px">&#8615; More</div>
<div class="abs" style="left:534px;top:25.299999999999997px;width:104px;height:11.5px;background:#3d5793"></div>
<div class="abs" style="left:562px;top:25.299999999999997px;width:0.6px;height:11.5px;background:#39528f"></div>
<div class="abs" style="left:598px;top:25.299999999999997px;width:0.6px;height:11.5px;background:#39528f"></div>
<div class="abs" style="left:539px;top:28.6px;width:5.6px;height:5.8px;background:#fff;border-radius:0.6px"></div>
<div class="t" style="left:545.5px;top:27.799999999999997px;color:#fff;font-size:6.6px;line-height:8px">Live</div>
<svg class="abs" style="left:568px;top:28.799999999999997px" width="5" height="5"><circle cx="2.4" cy="2.4" r="1.9" stroke="#e4e8f2" stroke-width="0.8" fill="none"/></svg>
<div class="t" style="left:575px;top:27.799999999999997px;color:#fff;font-size:6.6px;line-height:8px">About</div>
<svg class="abs" style="left:603px;top:28.799999999999997px" width="5" height="5"><circle cx="2.4" cy="2.4" r="1.8" stroke="#e4e8f2" stroke-width="1" fill="none" stroke-dasharray="0.9 0.5"/></svg>
<div class="t" style="left:609.5px;top:27.799999999999997px;color:#fff;font-size:6.6px;line-height:8px">Settings</div>
<div class="abs" style="left:92px;top:434px;width:269px;height:60px;background:#f4f6fa"></div>
<div class="abs" style="left:92px;top:434px;width:269px;height:11.9px;background:#37508a"></div>
<div class="abs" style="left:92px;top:434px;width:80px;height:11.9px;background:#45619d"></div>
<svg class="abs" style="left:169px;top:442.4px" width="3" height="3"><path d="M3,0 L3,3 L0,3z" fill="#7cc05a"/></svg>
<div class="t" style="left:96.19999999999999px;top:435.8px;color:#fff;font-weight:bold;font-size:7px;line-height:8px">Forums / Last Replied</div>
<svg class="abs" style="left:97px;top:452.2px" width="6" height="7" viewBox="0 0 6 7"><rect x="0" y="0" width="6" height="7" fill="#bfc3ca"/><g stroke="#f4f6fa" stroke-width="0.5"><line x1="0" y1="1.8" x2="6" y2="1.8"/><line x1="0" y1="3.4" x2="6" y2="3.4"/><line x1="0" y1="5" x2="6" y2="5"/></g></svg>
<div class="t" style="left:105px;top:450px;color:#2d3f6a;font-weight:bold;font-size:6.6px;line-height:9px;text-decoration:underline;letter-spacing:0px">Cable Update (GBPUSD)</div>
<div class="abs" style="left:96.5px;top:461.2px;width:8.3px;height:8.3px;border-radius:50%;background:#3a3a3a;border:0.8px solid #8a8a8a"></div>
<div class="abs" style="left:112.5px;top:461.3px;width:7.8px;height:7.8px;border-radius:50%;background:#fff;border:1.3px solid #c52a2a"></div>
<div class="abs" style="left:114.80000000000001px;top:463.8px;width:3.2px;height:2.6px;background:#333;border-radius:1px"></div>
<svg class="abs" style="left:106.19999999999999px;top:462.8px" width="4" height="5" viewBox="0 0 4 5"><path d="M1,0.5 L3.6,1.2 L2.8,3 L0.6,2.6z" fill="#d83a3a"/><path d="M1,0.5 L0.2,4.8" stroke="#d83a3a" stroke-width="0.6"/></svg>
<svg class="abs" style="left:121.6px;top:462.8px" width="4" height="5" viewBox="0 0 4 5"><path d="M1,0.5 L3.6,1.2 L2.8,3 L0.6,2.6z" fill="#d83a3a"/><path d="M1,0.5 L0.2,4.8" stroke="#d83a3a" stroke-width="0.6"/></svg>
<div class="t" style="left:127.5px;top:460.8px;color:#8a8a8a;font-size:6.4px;line-height:9px">leads</div>
<div class="t" style="left:146.5px;top:460.8px;color:#c4c4c4;font-size:6.4px;line-height:9px">|</div>
<div class="t" style="left:152px;top:460.8px;color:#8a8a8a;font-size:6.4px;line-height:9px;letter-spacing:0.1px"><u style="text-decoration-color:#aaa">Interactive Trading</u></div>
<div class="t" style="left:209.5px;top:460.8px;color:#c4c4c4;font-size:6.4px;line-height:9px">|</div>
<div class="t" style="left:215.8px;top:460.8px;color:#8a8a8a;font-size:6.4px;line-height:9px;letter-spacing:0.15px">737,709 replies</div>
<div class="t" style="left:96.5px;top:470.2px;color:#8a8a8a;font-size:6.4px;line-height:9px"><u style="text-decoration-color:#aaa">OperanivlFx replied &lt; 1 min ago</u></div>
<svg class="abs" style="left:190.3px;top:473.3px" width="5" height="4"><path d="M0.3,0.3 L4.5,0.3 L2.4,3.3z" fill="#5bb04a"/></svg>
<div class="t" style="left:198.5px;top:470.2px;color:#222;font-size:6.4px;line-height:9px">stop lose in advance</div>
<svg class="abs" style="left:260px;top:471.3px" width="5" height="6"><path d="M4.5,0.5 L2,3 L0.3,5.5 L2.8,3.8z" fill="#d33"/></svg>
<div class="abs" style="left:368.6px;top:434px;width:269.4px;height:60px;background:#f4f6fa"></div>
<div class="abs" style="left:368.6px;top:434px;width:269.4px;height:11.9px;background:#37508a"></div>
<div class="abs" style="left:368.6px;top:434px;width:79.2px;height:11.9px;background:#45619d"></div>
<svg class="abs" style="left:444.7px;top:442.4px" width="3" height="3"><path d="M3,0 L3,3 L0,3z" fill="#7cc05a"/></svg>
<div class="t" style="left:373.2px;top:435.8px;color:#fff;font-weight:bold;font-size:7px;line-height:8px">News / Latest Stories</div>
<div class="abs" style="left:584.7px;top:434px;width:53.3px;height:11.9px;background:#3d5793"></div>
<div class="t" style="left:588.5px;top:435.8px;color:#dde3f0;font-size:6.6px;line-height:8px">&#x29;</div>
<div class="abs" style="left:604.8px;top:437.3px;width:5.8px;height:5.8px;background:#fff;border-radius:0.6px"></div>
<div class="t" style="left:612px;top:435.8px;color:#fff;font-size:6.6px;line-height:8px">Stream</div>
<div class="abs" style="left:374px;top:452.3px;width:5.6px;height:5.6px;background:#c7cad0"></div>
<div class="t" style="left:382px;top:450.7px;color:#2d3f6a;font-weight:bold;font-size:6.6px;line-height:9px;text-decoration:underline">Hackers Breached UK Pension Protection Fund, Stole Employee Data</div>
<div class="t" style="left:374px;top:460px;color:#8a8a8a;font-size:6.4px;line-height:9px"><u style="text-decoration-color:#aaa">From bnnbloomberg.ca</u> &nbsp;<span style="color:#bbb">|</span>&nbsp; 3 min ago</div>
<div class="abs" style="left:369px;top:471.5px;width:269px;height:0.6px;background:#eceef2"></div>
<div class="abs" style="left:374px;top:476.8px;width:5.6px;height:5.6px;background:#c7cad0"></div>
<div class="t" style="left:382px;top:475.6px;color:#2d3f6a;font-weight:bold;font-size:6.6px;line-height:9px;text-decoration:underline">US: Durable Goods Orders decline by 1% in February vs. +0.6% expected</div>
</div>
<div class="abs" style="left:306px;top:42px;width:155.4px;height:24.6px;background:rgba(34,34,34,0.86);border-radius:1px"></div>
<div class="t" style="left:325.5px;top:49.6px;color:#eee;font-weight:bold;font-size:8px;line-height:9px;letter-spacing:-0.2px;-webkit-text-stroke:0">Press</div>
<div class="abs" style="left:349.4px;top:44.8px;width:26.5px;height:17.8px;border:1.1px solid #c8c8c8;border-radius:2px"></div>
<div class="t" style="left:352.6px;top:49.6px;color:#eee;font-weight:bold;font-size:8px;line-height:9px;-webkit-text-stroke:0">(fn) F</div>
<div class="t" style="left:379.4px;top:49.6px;color:#eee;font-weight:bold;font-size:8px;line-height:9px;letter-spacing:-0.25px;-webkit-text-stroke:0">to exit full screen</div>
<div id="sb" class="abs"></div><div id="sbthumb" class="abs"></div>
</div></body></html>
